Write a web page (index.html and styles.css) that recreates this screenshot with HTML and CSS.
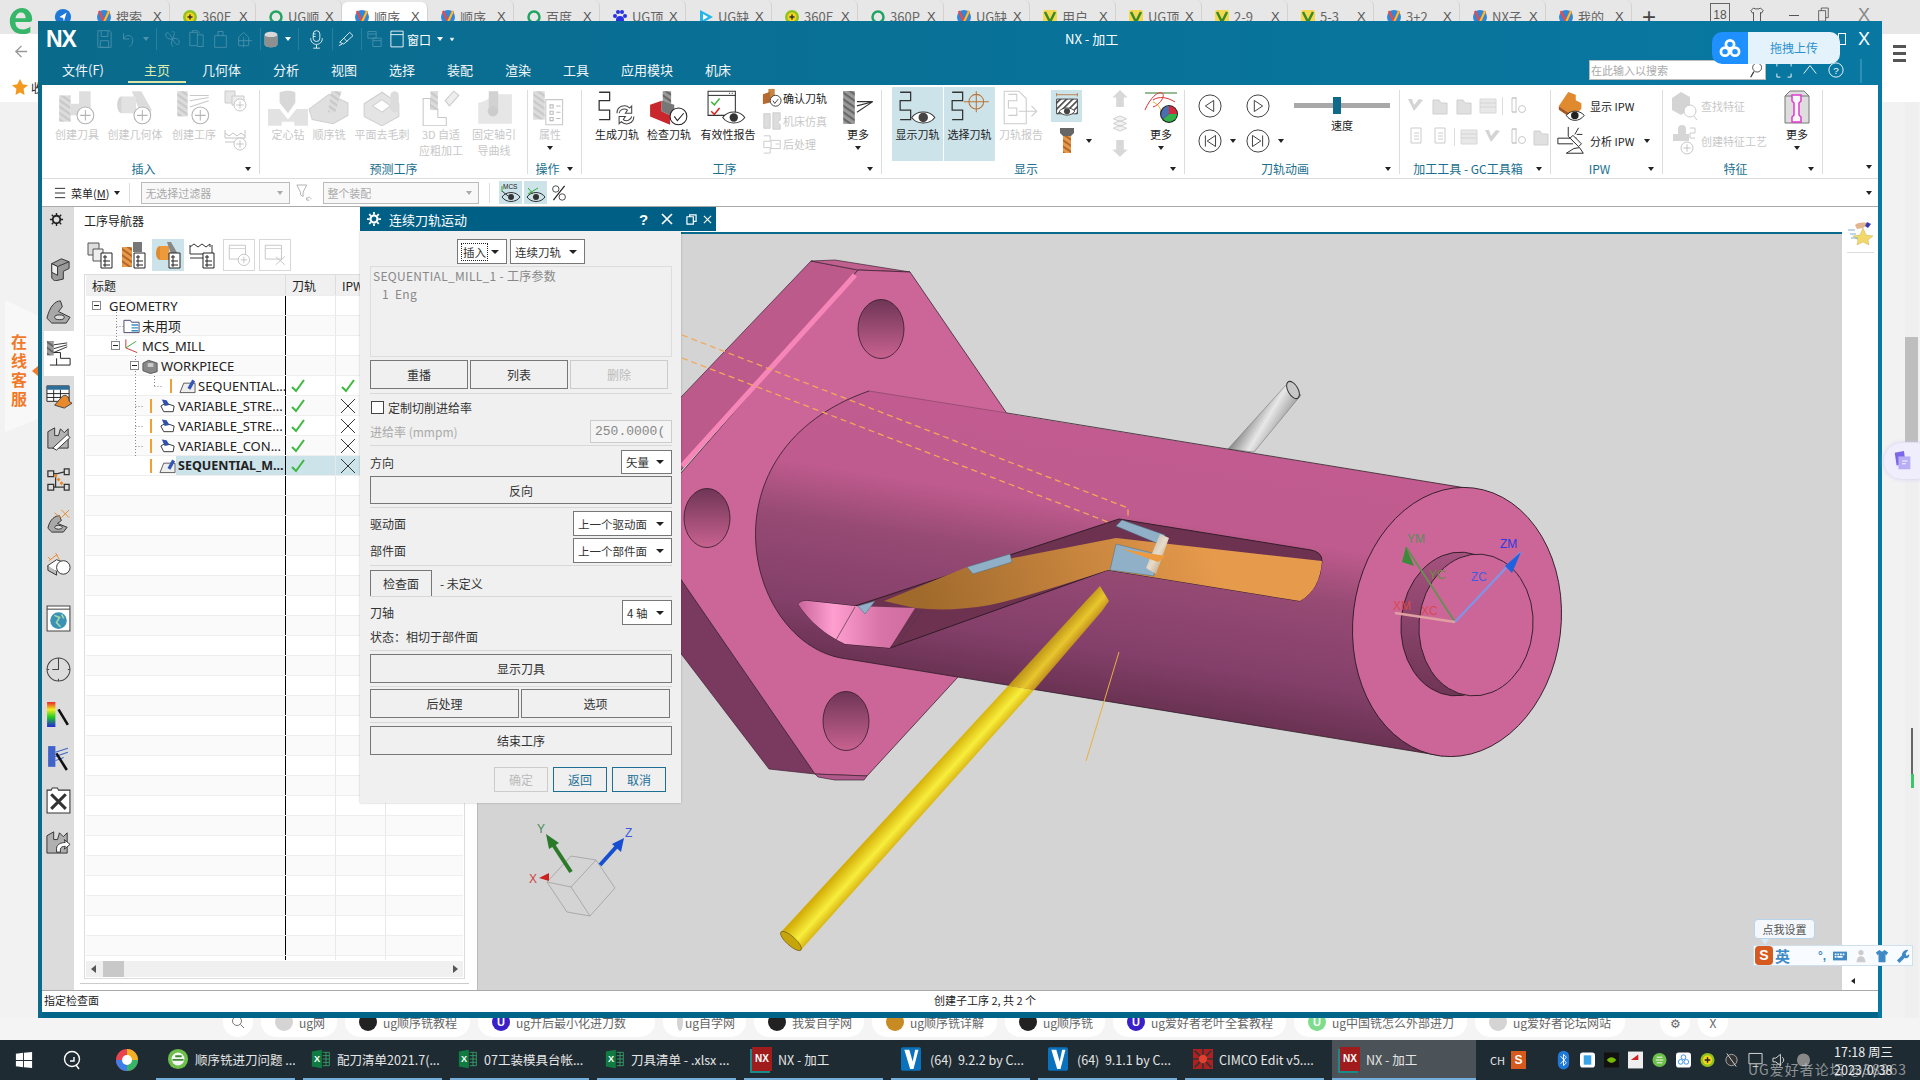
FILE: index.html
```html
<!DOCTYPE html>
<html lang="zh-CN">
<head>
<meta charset="utf-8">
<title>NX - 加工</title>
<link rel="stylesheet" href="styles.css">
</head>
<body>
<svg class="defs" aria-hidden="true">
<defs>
<g id="plus"><circle r="8" fill="#fff" stroke="#b4b4b4"/><path d="M-5 0H5M0-5V5" stroke="#b4b4b4" fill="none"/></g>
<pattern id="flute" width="5" height="5" patternUnits="userSpaceOnUse" patternTransform="rotate(35)"><rect width="5" height="5" fill="#dcdcdc"/><rect width="5" height="2" fill="#c8c8c8"/></pattern>
<pattern id="fluted" width="5" height="5" patternUnits="userSpaceOnUse" patternTransform="rotate(35)"><rect width="5" height="5" fill="#9a9a9a"/><rect width="5" height="2" fill="#666"/></pattern>
<pattern id="flutor" width="5" height="5" patternUnits="userSpaceOnUse" patternTransform="rotate(35)"><rect width="5" height="5" fill="#e89a4a"/><rect width="5" height="2" fill="#b5662a"/></pattern>
<pattern id="hatch" width="5" height="5" patternUnits="userSpaceOnUse" patternTransform="rotate(45)"><rect width="5" height="5" fill="#fff"/><rect width="2" height="5" fill="#555"/></pattern>
<symbol id="i-cr-tool" viewBox="0 0 40 34"><path d="M3 5h11v25H3z" fill="url(#flute)"/><path d="M14 13h8V1h11v23H14z" fill="#dedede"/><use href="#plus" x="28" y="24"/></symbol>
<symbol id="i-cr-geom" viewBox="0 0 40 34"><path d="M17 1l9 0 10 18-8 10z" fill="#dcdcdc"/><ellipse cx="7" cy="14" rx="4" ry="8" fill="#d4d4d4"/><path d="M7 6h14v16H7z" fill="#e2e2e2"/><use href="#plus" x="27" y="24"/></symbol>
<symbol id="i-cr-op" viewBox="0 0 40 34"><path d="M4 1h10v24H4z" fill="url(#flute)"/><path d="M16 5h18M16 10l18-3M16 16l18-6" stroke="#c8c8c8" fill="none"/><use href="#plus" x="26" y="24"/></symbol>
<symbol id="i-sm1" viewBox="0 0 24 24"><path d="M1 1h10v12H1z" fill="#e6e6e6" stroke="#ccc"/><path d="M8 6h12v9H8z" fill="#eee" stroke="#ccc"/><use href="#plus" transform="translate(16 15) scale(.75)"/></symbol>
<symbol id="i-sm2" viewBox="0 0 24 24"><path d="M1 5l4 3 4-3 4 3 4-3 4 3M1 2v8h20V2M1 14h20" stroke="#c4c4c4" fill="none"/><use href="#plus" transform="translate(16 16) scale(.75)"/></symbol>
<symbol id="i-drill" viewBox="0 0 40 34"><path d="M12 2c5-2 12-2 15 0v10l-7 10-8-10z" fill="#d8d8d8"/><path d="M1 18h11l8 10 8-10h11v16H26v-4h-12v4H1z" fill="#e2e2e2"/></symbol>
<symbol id="i-mill" viewBox="0 0 40 34"><path d="M1 18L20 4l18 8v12l-14 8L4 28z" fill="#e0e0e0" stroke="#d0d0d0"/><path d="M22 1h10l-6 20h-7z" fill="url(#flute)"/></symbol>
<symbol id="i-deburr" viewBox="0 0 40 34"><path d="M3 13L20 2l16 11v12L20 34 3 25z" fill="#e4e4e4" stroke="#cfcfcf"/><path d="M11 15l9-6 8 6-8 6z" fill="#fff" stroke="#cfcfcf"/><rect x="28" y="1" width="8" height="20" rx="4" fill="#dcdcdc"/></symbol>
<symbol id="i-adapt" viewBox="0 0 40 34"><path d="M3 8h7v10h7v8h8v8H3z" fill="none" stroke="#c8c8c8"/><path d="M10 1h7v18h-7z" fill="url(#flute)"/><path d="M24 10l8-9 5 4-9 10z" fill="#eee" stroke="#ccc"/></symbol>
<symbol id="i-fix" viewBox="0 0 40 34"><path d="M5 12c8 0 12-8 20-8h12v28H5z" fill="#e6e6e6"/><path d="M15 1h9v18h-9z" fill="#d2d2d2"/><circle cx="19" cy="20" r="5" fill="#ccc"/></symbol>
<symbol id="i-prop" viewBox="0 0 40 34"><path d="M4 1h11v27H4z" fill="url(#flute)"/><path d="M16 9h16v24H16z" fill="#fff" stroke="#c8c8c8"/><path d="M20 14h3v3h-3zM20 20h3v3h-3zM20 26h3v3h-3zM26 15h4M26 21h4M26 27h4" stroke="#bbb" fill="none"/></symbol>
<symbol id="i-gen" viewBox="0 0 40 34"><path d="M3 2h10v8H3v9h10v9H3" fill="none" stroke="#333" stroke-width="1.2"/><path d="M20 22a7 7 0 0 1 12-5l2-2v7h-6l2-3a5 5 0 0 0-8 3m14 3a7 7 0 0 1-12 5l-2 2v-7h6l-2 3a5 5 0 0 0 8-3" fill="none" stroke="#444"/></symbol>
<symbol id="i-verify" viewBox="0 0 40 34"><path d="M14 1h8v12h-8z" fill="url(#fluted)"/><path d="M2 14l11-4 0 10 8 4 0 9-19-8z" fill="#c9272c"/><path d="M13 10l12 4v4l-4 6-8-4z" fill="#777"/><circle cx="29" cy="25" r="8" fill="#fff" stroke="#222"/><path d="M25 25l3 4 6-7" fill="none" stroke="#222"/></symbol>
<symbol id="i-report" viewBox="0 0 40 34"><path d="M1 1h26v23H1z" fill="#fff" stroke="#333"/><path d="M1 5h26" stroke="#333"/><path d="M21 3h1M23.5 3h1" stroke="#333"/><path d="M4 11l3 3 5-6" stroke="#3cb43c" fill="none" stroke-width="1.4"/><path d="M4 20l3 3 5-6" stroke="#d22" fill="none" stroke-width="1.4"/><path d="M15 26c5-7 16-7 21 0-5 7-16 7-21 0z" fill="#fff" stroke="#333"/><circle cx="25.5" cy="26" r="4" fill="#333"/></symbol>
<symbol id="i-confirm" viewBox="0 0 22 22"><path d="M7 1h7v11H7z" fill="#c48844"/><path d="M1 7l8-3v12l-8 2z" fill="#b66a2f"/><circle cx="15" cy="14" r="6" fill="#fff" stroke="#333"/><path d="M12 14l2 3 4-5" stroke="#333" fill="none"/></symbol>
<symbol id="i-sim" viewBox="0 0 22 22"><path d="M2 3h7v16H2zM12 2h8v8l-3 2 3 3v5h-8z" fill="#ddd" stroke="#ccc"/></symbol>
<symbol id="i-post" viewBox="0 0 22 22"><path d="M2 2h7v6H2v7h7v6H2" fill="none" stroke="#c8c8c8"/><path d="M10 7h10v9H10zM15 11h4" stroke="#c8c8c8" fill="none"/></symbol>
<symbol id="i-moretool" viewBox="0 0 32 34"><path d="M2 1h11v31H2z" fill="url(#fluted)"/><path d="M15 11h15M15 15l15-4M15 21l15-10" stroke="#333" fill="none"/></symbol>
<symbol id="i-show" viewBox="0 0 40 34"><path d="M3 2h10v8H3v9h10v9H3" fill="none" stroke="#333" stroke-width="1.2"/><path d="M14 26c5-7 17-7 22 0-5 7-17 7-22 0z" fill="#fff" stroke="#333"/><circle cx="25" cy="26" r="4.5" fill="#444"/></symbol>
<symbol id="i-select" viewBox="0 0 40 34"><path d="M3 2h10v8H3v9h10v9H3" fill="none" stroke="#333" stroke-width="1.2"/><circle cx="26" cy="11" r="7" fill="none" stroke="#b8763a"/><path d="M14 11h24M26 1v20" stroke="#b8763a" fill="none"/></symbol>
<symbol id="i-path-rep" viewBox="0 0 40 34"><path d="M4 1h14l7 7v24H4z" fill="#fff" stroke="#ccc"/><path d="M8 4h8v6H8v7h8v7H8" fill="none" stroke="#ccc"/><path d="M18 20h16M30 15l5 5-5 5" stroke="#ccc" fill="none"/></symbol>
<symbol id="i-box" viewBox="0 0 30 32"><path d="M3 3h24M3 1v4M27 1v4" stroke="#b8763a" fill="none"/><path d="M3 8h24v17H3z" fill="url(#hatch)" stroke="#333"/><path d="M6 22c4-5 14-5 18 0-4 6-14 6-18 0z" fill="#fff" stroke="#333"/><circle cx="15" cy="22" r="3.5" fill="#444"/></symbol>
<symbol id="i-endmill" viewBox="0 0 22 26"><path d="M4 0h14v5l-3 3H7L4 5z" fill="#666"/><path d="M7 8h8v17H7z" fill="url(#flutor)"/></symbol>
<symbol id="i-up" viewBox="0 0 20 18"><path d="M10 0l8 8h-4v10H6V8H2z" fill="#d8d8d8"/></symbol>
<symbol id="i-down" viewBox="0 0 20 18"><path d="M10 18l8-8h-4V0H6v10H2z" fill="#d8d8d8"/></symbol>
<symbol id="i-layers" viewBox="0 0 20 18"><path d="M3 4l7-3 7 3-7 3zM3 9l7-3 7 3-7 3zM3 14l7-3 7 3-7 3z" fill="#f2f2f2" stroke="#ccc"/></symbol>
<symbol id="i-more2" viewBox="0 0 34 36"><path d="M1 3h32" stroke="#2a7a2a"/><path d="M1 20C6 8 14 1 18 3s-2 12-9 14m0-7c6-4 14-3 22 2" stroke="#d33" fill="none"/><path d="M9 12c6 2 8 8 10 14" stroke="#e8b030" fill="none"/><circle cx="25" cy="24" r="9" fill="#222"/><path d="M25 24V16a8 8 0 0 1 8 8z" fill="#d22c3a"/><path d="M25 24h8a8 8 0 0 1-14 5z" fill="#35b34a"/><path d="M25 24l-6 5a8 8 0 0 1 6-13z" fill="#4a6fb0"/></symbol>
<symbol id="i-ipw" viewBox="0 0 32 34"><path d="M2 17l10-15 8 3 0 6 6 3 0 6-8 8z" fill="#e08a30"/><path d="M2 17l16 11v4L2 21z" fill="#a55a20"/><path d="M10 27c4-6 14-6 19 0-5 7-15 7-19 0z" fill="#fff" stroke="#222"/><circle cx="19" cy="27" r="4" fill="#222"/></symbol>
<symbol id="i-ipwan" viewBox="0 0 32 34"><path d="M1 14h20M1 14v6h16" stroke="#222" fill="none"/><path d="M12 2v10l8 8M23 3l-4 7M27 10h-6" stroke="#222" fill="none"/><path d="M17 11l9 9-3 3-9-9z" fill="#fff" stroke="#222"/><path d="M10 30h18l-4-6-6 1z" fill="#fff" stroke="#222"/></symbol>
<symbol id="i-find" viewBox="0 0 28 32"><path d="M2 8l9-6 9 5v12l-9 6-9-5z" fill="#d4d4d4"/><circle cx="20" cy="21" r="6" fill="#fff" stroke="#ccc"/><path d="M24 26l3 4" stroke="#ccc"/></symbol>
<symbol id="i-create" viewBox="0 0 28 32"><path d="M8 4a4 4 0 0 1 8 0v5h3v7H3V9h5z" fill="#d6d6d6"/><path d="M20 3h5v5h-5v5h5" stroke="#ccc" fill="none"/><use href="#plus" transform="translate(17 23) scale(.75)"/></symbol>
<symbol id="i-more3" viewBox="0 0 32 36"><path d="M4 6l5-5h14l5 5v27H4z" fill="#ddd" stroke="#777"/><path d="M11 5h9v6l-2 2v12l2 2v5h-9v-5l2-2V13l-2-2z" fill="#f8f8f8" stroke="#e03ad0" stroke-width="1.5"/><path d="M4 6h7M20 6h8" stroke="#777"/></symbol>
<symbol id="i-tb" viewBox="0 0 20 20"><path d="M3 4h6l2 3h6v11H3z" fill="#e0e0e0" stroke="#cfcfcf"/></symbol>
<symbol id="i-tb2" viewBox="0 0 20 20"><path d="M2 3l6 12 9-11-4-1-5 6-2-6z" fill="#d4d4d4"/></symbol>
<symbol id="i-tb3" viewBox="0 0 20 20"><path d="M2 3h16v14H2z" fill="#e8e8e8" stroke="#d8d8d8"/><path d="M2 7h16M2 11h16" stroke="#d4d4d4"/></symbol>
<symbol id="i-tb4" viewBox="0 0 20 20"><path d="M5 1h10v15H5z" fill="#fff" stroke="#ccc"/><path d="M8 6h5M8 9h5M8 12h5" stroke="#ccc"/></symbol>
<symbol id="i-tb5" viewBox="0 0 20 20"><path d="M5 2h4v14h-4zM5 2h5M5 16h5" fill="none" stroke="#c8c8c8"/><circle cx="15" cy="13" r="3.5" fill="none" stroke="#c8c8c8"/></symbol>
<symbol id="i-dlgadd" viewBox="0 0 32 32"><path d="M4 4h20v17H4z" fill="none" stroke="#bdbdbd"/><path d="M4 8h20" stroke="#ccc"/><circle cx="22" cy="22" r="7" fill="#fff" stroke="#bdbdbd"/><path d="M18 22h8M22 18v8" stroke="#bdbdbd"/></symbol>
<symbol id="i-dlgdel" viewBox="0 0 32 32"><path d="M4 4h20v17H4z" fill="none" stroke="#bdbdbd"/><path d="M4 8h20" stroke="#ccc"/><path d="M17 18l11 10M28 18L17 28" stroke="#bdbdbd"/></symbol>
<symbol id="i-nav1" viewBox="0 0 26 28"><path d="M1 2h11v12H1z" fill="#ddd" stroke="#555"/><path d="M6 8h10v12H6z" fill="#eee" stroke="#555"/><path d="M14 12h11v15H14z" fill="#fff" stroke="#222"/><path d="M17 15h2v2h-2zM17 19h2v2h-2zM17 23h2v2h-2zM20 20h3M20 24h3" stroke="#222" fill="none"/></symbol>
<symbol id="i-nav2" viewBox="0 0 26 28"><path d="M1 6h10v20H1z" fill="url(#flutor)"/><path d="M12 1h9v10h-9z" fill="#777"/><path d="M13 12h11v15H13z" fill="#fff" stroke="#222"/><path d="M16 15h2v2h-2zM16 19h2v2h-2zM16 23h2v2h-2zM19 20h3M19 24h3" stroke="#222" fill="none"/></symbol>
<symbol id="i-nav3" viewBox="0 0 26 28"><ellipse cx="5" cy="12" rx="4" ry="7" fill="#e08a30"/><path d="M5 5h9v14H5z" fill="#ee9a3a"/><path d="M12 1l4 0 8 14-6 4z" fill="#888"/><path d="M14 12h11v15H14z" fill="#fff" stroke="#222"/><path d="M17 15h2v2h-2zM17 19h2v2h-2zM17 23h2v2h-2zM20 20h3M20 24h3" stroke="#222" fill="none"/></symbol>
<symbol id="i-nav4" viewBox="0 0 26 28"><path d="M1 6l4-3 4 3 4-3 4 3 4-3v3M1 4v9h22V4M1 17h14" stroke="#333" fill="none"/><path d="M14 12h11v15H14z" fill="#fff" stroke="#222"/><path d="M17 15h2v2h-2zM17 19h2v2h-2zM17 23h2v2h-2zM20 20h3M20 24h3" stroke="#222" fill="none"/></symbol>
<symbol id="tr-folder" viewBox="0 0 18 16"><path d="M1 2h7l1 2h8v11H1z" fill="#fff" stroke="#446"/><path d="M9 7h7M9 10h7M9 13h7" stroke="#3a8ec2" stroke-width="1.5"/></symbol>
<symbol id="tr-mcs" viewBox="0 0 18 16"><path d="M3 10V1M3 10l12 5" fill="none" stroke="#c33"/><path d="M3 10l11-7" stroke="#3a3" fill="none"/></symbol>
<symbol id="tr-work" viewBox="0 0 18 16"><path d="M1 5l6-3 9 3v9l-7 2-8-3z" fill="#888" stroke="#555"/><path d="M6 5h6v4H6z" fill="#ccc"/></symbol>
<symbol id="tr-seq" viewBox="0 0 18 16"><path d="M1 15L5 5h12v10z" fill="#eee" stroke="#555"/><path d="M9 10l5-9 3 2-5 9z" fill="#3356b8"/></symbol>
<symbol id="tr-var" viewBox="0 0 18 16"><path d="M2 8l5-3 9 3-1 6H5z" fill="#fff" stroke="#333"/><path d="M3 1l5 1 3 5-5 1z" fill="#2f52a8"/></symbol>
<symbol id="ok" viewBox="0 0 16 14"><path d="M2 8l4 4 8-11" fill="none" stroke="#3cb83c" stroke-width="2"/></symbol>
<symbol id="no" viewBox="0 0 16 14"><path d="M1 0l14 14M15 0L1 14" fill="none" stroke="#333"/></symbol>
<symbol id="t-n" viewBox="0 0 16 16"><circle cx="8" cy="8" r="7" fill="#2a88dd"/><path d="M3 2l5 11 5-11" fill="none" stroke="#e64a4a" stroke-width="2.5"/><path d="M8 13l5-11" stroke="#f2c230" stroke-width="2" fill="none"/></symbol>
<symbol id="t-360" viewBox="0 0 16 16"><circle cx="8" cy="8" r="7" fill="#8fc31f"/><circle cx="8" cy="8" r="4.5" fill="#f4d41c"/><path d="M5.5 8h5M8 5.5v5" stroke="#333" stroke-width="1.5"/></symbol>
<symbol id="t-o" viewBox="0 0 16 16"><circle cx="8" cy="8" r="5.5" fill="none" stroke="#1fa463" stroke-width="2.5"/></symbol>
<symbol id="t-paw" viewBox="0 0 16 16"><circle cx="8" cy="11" r="4" fill="#2932e1"/><circle cx="3" cy="7" r="2" fill="#2932e1"/><circle cx="13" cy="7" r="2" fill="#2932e1"/><circle cx="6" cy="3" r="2" fill="#2932e1"/><circle cx="10" cy="3" r="2" fill="#2932e1"/></symbol>
<symbol id="t-play" viewBox="0 0 16 16"><path d="M2 1l13 7-13 7z" fill="#27b5e8"/><path d="M5 5l5 3-5 3z" fill="#fff"/></symbol>
<symbol id="t-v" viewBox="0 0 16 16"><rect x="1" y="1" width="14" height="14" rx="2" fill="#f4d850"/><path d="M3 3l5 10 5-10" fill="none" stroke="#3a8a2a" stroke-width="2.5"/></symbol>
<symbol id="xl" viewBox="0 0 24 24"><path d="M1 3l12-2v22L1 21z" fill="#107c41"/><path d="M14 4h8v16h-8M14 8h8M14 12h8M14 16h8M18 4v16" stroke="#3aa66a" fill="none"/><text x="3.5" y="16" font-size="11" font-family="Liberation Sans" font-weight="700" fill="#fff">X</text></symbol>
<symbol id="vr" viewBox="0 0 24 28"><rect width="24" height="28" rx="2" fill="#0a72bc"/><path d="M4 3l7 23h4l6-23h-4l-3 14-4-14z" fill="#fff"/></symbol>
</defs>
</svg>

<div class="desktop">
  <div class="browser">
    <div class="tabbar">
      <div class="edge-logo"><svg class="edge-ic" viewBox="0 0 28 30"><path d="M24 16H8c0 5 3 8 8 8 3 0 6-1 8-3v6c-3 2-6 2-9 2C7 29 2 23 2 15 2 7 8 1 15 1c6 0 11 5 11 12 0 1 0 2-2 3zM8 12h11c0-4-2-6-5-6s-5 2-6 6z" fill="#35b668"/></svg></div>
      <svg class="tab-nav" viewBox="0 0 20 20"><circle cx="10" cy="10" r="9" fill="#1e78d8"/><path d="M14 5l-3 10-1-4-4-1z" fill="#fff"/></svg>
      <div class="tabs">
        <div class="tab"><svg class="tab-ic"><use href="#t-n"/></svg><span class="tab-t">搜索</span><span class="tab-x">X</span></div>
        <div class="tab"><svg class="tab-ic"><use href="#t-360"/></svg><span class="tab-t">360E</span><span class="tab-x">X</span></div>
        <div class="tab"><svg class="tab-ic"><use href="#t-o"/></svg><span class="tab-t">UG顺</span><span class="tab-x">X</span></div>
        <div class="tab active"><svg class="tab-ic"><use href="#t-n"/></svg><span class="tab-t">顺序</span><span class="tab-x">X</span></div>
        <div class="tab"><svg class="tab-ic"><use href="#t-n"/></svg><span class="tab-t">顺序</span><span class="tab-x">X</span></div>
        <div class="tab"><svg class="tab-ic"><use href="#t-o"/></svg><span class="tab-t">百度</span><span class="tab-x">X</span></div>
        <div class="tab"><svg class="tab-ic"><use href="#t-paw"/></svg><span class="tab-t">UG顶</span><span class="tab-x">X</span></div>
        <div class="tab"><svg class="tab-ic"><use href="#t-play"/></svg><span class="tab-t">UG缺</span><span class="tab-x">X</span></div>
        <div class="tab"><svg class="tab-ic"><use href="#t-360"/></svg><span class="tab-t">360E</span><span class="tab-x">X</span></div>
        <div class="tab"><svg class="tab-ic"><use href="#t-o"/></svg><span class="tab-t">360P</span><span class="tab-x">X</span></div>
        <div class="tab"><svg class="tab-ic"><use href="#t-n"/></svg><span class="tab-t">UG缺</span><span class="tab-x">X</span></div>
        <div class="tab"><svg class="tab-ic"><use href="#t-v"/></svg><span class="tab-t">用户</span><span class="tab-x">X</span></div>
        <div class="tab"><svg class="tab-ic"><use href="#t-v"/></svg><span class="tab-t">UG顶</span><span class="tab-x">X</span></div>
        <div class="tab"><svg class="tab-ic"><use href="#t-v"/></svg><span class="tab-t">2-9</span><span class="tab-x">X</span></div>
        <div class="tab"><svg class="tab-ic"><use href="#t-v"/></svg><span class="tab-t">5-3</span><span class="tab-x">X</span></div>
        <div class="tab"><svg class="tab-ic"><use href="#t-n"/></svg><span class="tab-t">3+2</span><span class="tab-x">X</span></div>
        <div class="tab"><svg class="tab-ic"><use href="#t-n"/></svg><span class="tab-t">NX子</span><span class="tab-x">X</span></div>
        <div class="tab"><svg class="tab-ic"><use href="#t-n"/></svg><span class="tab-t">我的</span><span class="tab-x">X</span></div>
        <div class="tab-add">+</div>
      </div>
      <div class="win-ctl">
        <span class="badge18">18</span>
        <svg class="ctl-ic" viewBox="0 0 16 18"><path d="M4 1L1 4l2 3 1-1v11h8V6l1 1 2-3-3-3-2 1H6z" fill="none" stroke="#444"/></svg>
        <span class="ctl-min"></span>
        <svg class="ctl-ic" viewBox="0 0 16 18"><path d="M3 4h8v12H3zM6 4V1h8v11h-3" fill="none" stroke="#555"/></svg>
        <span class="ctl-x">X</span>
      </div>
    </div>
    <div class="addr">
      <div class="addr-left">
        <svg class="back" viewBox="0 0 16 16"><path d="M14 8H2M8 2L2 8l6 6" fill="none" stroke="#999" stroke-width="1.5"/></svg>
      </div>
      <div class="fav"><svg class="star" viewBox="0 0 20 20"><path d="M10 1l3 6 6 1-5 4 1 7-5-3-5 3 1-7-5-4 6-1z" fill="#f39a1e"/></svg><span>收</span></div>
      <div class="burger"><i></i><i></i><i></i></div>
    </div>
    <div class="page">
      <div class="side-online">
        <div class="online-tab"><span>在</span><span>线</span><span>客</span><span>服</span></div>
        <i class="online-arrow"></i>
      </div>
      <div class="page-scroll"><i class="thumb-main"></i><i class="thumb-low"></i><i class="thumb-green"></i></div>
    </div>
    <div class="suggest">
      <span class="pill pill-round"><svg class="pill-mg" viewBox="0 0 14 14"><circle cx="6" cy="6" r="4.5" fill="none" stroke="#777"/><path d="M9.5 9.5L13 13" stroke="#777"/></svg></span>
      <span class="pill p76"><i class="dot d-gray"></i>ug网</span>
      <span class="pill p125"><i class="dot d-black"></i>ug顺序铣教程</span>
      <span class="pill p177"><i class="dot d-blue">U</i>ug开后最小化进刀数</span>
      <span class="pill p83"><i class="dot dot-s d-gray"></i>ug自学网</span>
      <span class="pill p110"><i class="dot d-black"></i>我爱自学网</span>
      <span class="pill p125"><i class="dot d-orange"></i>ug顺序铣详解</span>
      <span class="pill p100"><i class="dot d-black"></i>ug顺序铣</span>
      <span class="pill p173"><i class="dot d-blue">U</i>ug爱好者老叶全套教程</span>
      <span class="pill p173"><i class="dot d-green">U</i>ug中国铣怎么外部进刀</span>
      <span class="pill p150"><i class="dot d-gray"></i>ug爱好者论坛网站</span>
      <span class="pill pill-round gap-right">⚙</span>
      <span class="pill pill-round">X</span>
    </div>
  </div>

  <div class="nx">
    <div class="nx-title">
      <div class="nx-logo">NX</div>
      <div class="qa">
        <svg class="qa-ic" viewBox="0 0 20 24"><path d="M2 2h14l2 2v18H2zM6 2v7h8V2M5 14h10v8H5z" fill="none" stroke="#4d93ad"/></svg>
        <svg class="qa-ic" viewBox="0 0 20 24"><path d="M4 5v7h7M4 12c3-7 12-5 11 3 0 3-2 5-4 6" fill="none" stroke="#4d93ad"/></svg>
        <svg class="qa-caret" viewBox="0 0 6 4"><path d="M0 0h6L3 4z" fill="#4d93ad"/></svg>
        <i class="qa-sep"></i>
        <svg class="qa-ic" viewBox="0 0 20 24"><path d="M10 12C6 4 3 3 2 6s2 7 8 6c4 8 8 8 8 4s-4-6-8-4zm0 0c-2 5-1 9 1 9M10 12c3-6 3-9 0-9" fill="none" stroke="#4d93ad"/></svg>
        <svg class="qa-ic" viewBox="0 0 20 24"><path d="M2 4h9v16H2zM11 7h7v14h-7M5 4V2h6l3 3" fill="none" stroke="#4d93ad"/></svg>
        <svg class="qa-ic" viewBox="0 0 20 24"><path d="M3 8h14v14H3zM7 8V3h6v5" fill="none" stroke="#4d93ad"/></svg>
        <svg class="qa-ic" viewBox="0 0 20 24"><path d="M3 10l6-6 6 6v10H3zM9 10v12M3 14h16" fill="none" stroke="#4d93ad"/></svg>
        <i class="qa-sep qs-m5"></i>
        <svg class="qa-ic cube" viewBox="0 0 20 24"><path d="M2 6c0-5 16-5 16 0v12c0 5-16 5-16 0z" fill="#d8d8d8"/><path d="M2 6c0 4 16 4 16 0v12c0 5-16 5-16 0z" fill="#8f8f8f"/></svg>
        <svg class="qa-caret w" viewBox="0 0 6 4"><path d="M0 0h6L3 4z" fill="#fff"/></svg>
        <i class="qa-sep qs-p2"></i>
        <svg class="qa-ic" viewBox="0 0 20 24"><rect x="6" y="2" width="8" height="13" rx="4" fill="none" stroke="#fff"/><path d="M3 11c0 10 14 10 14 0M10 19v4M6 23h8M6 6h3M6 9h3" stroke="#fff" fill="none"/></svg>
        <i class="qa-sep qs-m3"></i>
        <svg class="qa-ic" viewBox="0 0 20 24"><path d="M3 16L15 4l4 4-11 10zM8 11l4 4M2 20l4-2" fill="none" stroke="#fff"/></svg>
        <i class="qa-sep qs-m3"></i>
        <svg class="qa-ic" viewBox="0 0 20 24"><path d="M2 3h10v8H2zM8 11h10v10H8zM2 6h10M8 14h10" fill="none" stroke="#4d93ad"/></svg>
        <svg class="qa-win" viewBox="0 0 16 20"><path d="M1 1h14v18H1zM1 5h14" fill="none" stroke="#fff"/></svg>
        <span class="qa-txt">窗口</span>
        <svg class="qa-caret w" viewBox="0 0 6 4"><path d="M0 0h6L3 4z" fill="#fff"/></svg>
        <svg class="qa-caret w" viewBox="0 0 6 6"><path d="M0 0h6M0 2h6L3 6z" fill="#fff" stroke="#fff" stroke-width=".5"/></svg>
      </div>
      <div class="nx-name">NX - 加工</div>
      <div class="nx-winbtns"><i class="nx-restore"></i><span class="nx-close">X</span></div>
    </div>
    <div class="nx-menu">
      <span class="mi mi-file">文件(F)</span>
      <span class="mi on">主页</span>
      <span class="mi">几何体</span>
      <span class="mi">分析</span>
      <span class="mi">视图</span>
      <span class="mi">选择</span>
      <span class="mi">装配</span>
      <span class="mi">渲染</span>
      <span class="mi">工具</span>
      <span class="mi">应用模块</span>
      <span class="mi">机床</span>
      <div class="search">
        <div class="search-box"><span>在此输入以搜索</span><svg class="mag" viewBox="0 0 16 20"><circle cx="10" cy="7" r="5.5" fill="none" stroke="#333"/><path d="M6 12l-4 7" stroke="#333" stroke-width="1.5"/></svg></div>
        <svg class="sr-ic" viewBox="0 0 18 18"><path d="M1 5V1h4M13 1h4v4M17 13v4h-4M5 17H1v-4" fill="none" stroke="#fff"/></svg>
        <svg class="sr-ic" viewBox="0 0 18 18"><path d="M2 13l7-9 7 9" fill="none" stroke="#fff"/></svg>
        <svg class="sr-ic" viewBox="0 0 18 18"><circle cx="9" cy="9" r="8" fill="none" stroke="#fff"/><text x="6" y="13" font-size="11" font-family="Liberation Sans" fill="#fff">?</text></svg>
        <i class="sr-bang"></i>
      </div>
    </div>

    <div class="ribbon">
      <div class="g g1">
        <div class="g-body">
          <div class="rb dis w46"><svg class="ic34"><use href="#i-cr-tool"/></svg><span>创建刀具</span></div>
          <div class="rb dis w58"><svg class="ic34"><use href="#i-cr-geom"/></svg><span>创建几何体</span></div>
          <div class="rb dis w48"><svg class="ic34"><use href="#i-cr-op"/></svg><span>创建工序</span></div>
          <div class="stack-ic"><svg class="ic24"><use href="#i-sm1"/></svg><svg class="ic24"><use href="#i-sm2"/></svg></div>
        </div>
        <div class="g-foot"><span>插入</span><i class="car"></i></div>
      </div>
      <div class="g g2">
        <div class="g-body">
          <div class="rb dis w36"><svg class="ic34"><use href="#i-drill"/></svg><span>定心钻</span></div>
          <div class="rb dis w36"><svg class="ic34"><use href="#i-mill"/></svg><span>顺序铣</span></div>
          <div class="rb dis w60"><svg class="ic34"><use href="#i-deburr"/></svg><span>平面去毛刺</span></div>
          <div class="rb dis w48"><svg class="ic34"><use href="#i-adapt"/></svg><span>3D 自适<br>应粗加工</span></div>
          <div class="rb dis w48"><svg class="ic34"><use href="#i-fix"/></svg><span>固定轴引<br>导曲线</span></div>
        </div>
        <div class="g-foot"><span>预测工序</span></div>
      </div>
      <div class="g g3">
        <div class="g-body">
          <div class="rb dis w36"><svg class="ic34"><use href="#i-prop"/></svg><span>属性</span><i class="car car-b"></i></div>
        </div>
        <div class="g-foot"><span>操作</span><i class="car"></i></div>
      </div>
      <div class="g g4">
        <div class="g-body">
          <div class="rb w50"><svg class="ic34"><use href="#i-gen"/></svg><span>生成刀轨</span></div>
          <div class="rb w50"><svg class="ic34"><use href="#i-verify"/></svg><span>检查刀轨</span></div>
          <div class="rb w64"><svg class="ic34"><use href="#i-report"/></svg><span>有效性报告</span></div>
          <div class="mini w76">
            <div class="mini-i"><svg class="ic20"><use href="#i-confirm"/></svg><span>确认刀轨</span></div>
            <div class="mini-i dis"><svg class="ic20"><use href="#i-sim"/></svg><span>机床仿真</span></div>
            <div class="mini-i dis"><svg class="ic20"><use href="#i-post"/></svg><span>后处理</span></div>
          </div>
          <div class="rb w36"><svg class="ic34"><use href="#i-moretool"/></svg><span>更多</span><i class="car car-b"></i></div>
        </div>
        <div class="g-foot"><span>工序</span><i class="car"></i></div>
      </div>
      <div class="g g5">
        <div class="g-body">
          <div class="rb w51 hi"><svg class="ic34"><use href="#i-show"/></svg><span>显示刀轨</span></div>
          <div class="rb w51 hi"><svg class="ic34"><use href="#i-select"/></svg><span>选择刀轨</span></div>
          <div class="rb dis w50"><svg class="ic34"><use href="#i-path-rep"/></svg><span>刀轨报告</span></div>
          <div class="disp-col">
            <span class="disp-box"><svg class="ic-box"><use href="#i-box"/></svg></span>
            <span class="disp-tool"><svg class="ic-tool"><use href="#i-endmill"/></svg><i class="car"></i></span>
          </div>
          <div class="arrows"><svg class="ic-ar"><use href="#i-up"/></svg><svg class="ic-ar"><use href="#i-layers"/></svg><svg class="ic-ar"><use href="#i-down"/></svg></div>
          <div class="rb w40 ml8"><svg class="ic34"><use href="#i-more2"/></svg><span>更多</span><i class="car car-b"></i></div>
        </div>
        <div class="g-foot"><span>显示</span><i class="car"></i></div>
      </div>
      <div class="g g6">
        <div class="g-body anim">
          <div class="anim-grid">
            <svg class="circ" viewBox="0 0 26 26"><circle cx="13" cy="13" r="12" fill="#fff" stroke="#333"/><path d="M17 7v12L8 13z" fill="none" stroke="#333"/></svg><i></i>
            <svg class="circ" viewBox="0 0 26 26"><circle cx="13" cy="13" r="12" fill="#fff" stroke="#333"/><path d="M9 7v12l9-6z" fill="none" stroke="#333"/></svg><i></i>
            <svg class="circ" viewBox="0 0 26 26"><circle cx="13" cy="13" r="12" fill="#fff" stroke="#333"/><path d="M19 7v12l-9-6zM8 7v12" fill="none" stroke="#333"/></svg><i class="car"></i>
            <svg class="circ" viewBox="0 0 26 26"><circle cx="13" cy="13" r="12" fill="#fff" stroke="#333"/><path d="M7 7v12l9-6zM18 7v12" fill="none" stroke="#333"/></svg><i class="car"></i>
          </div>
          <div class="speed"><div class="track"><i class="knob"></i></div><span>速度</span></div>
        </div>
        <div class="g-foot"><span>刀轨动画</span><i class="car"></i></div>
      </div>
      <div class="g g7">
        <div class="g-body tools">
          <div class="tb-row"><svg class="ic20"><use href="#i-tb2"/></svg><svg class="ic20"><use href="#i-tb"/></svg><svg class="ic20"><use href="#i-tb"/></svg><svg class="ic20"><use href="#i-tb3"/></svg><i class="tb-sep"></i><svg class="ic20"><use href="#i-tb5"/></svg></div>
          <div class="tb-row"><svg class="ic20"><use href="#i-tb4"/></svg><svg class="ic20"><use href="#i-tb4"/></svg><i class="tb-sep"></i><svg class="ic20"><use href="#i-tb3"/></svg><svg class="ic20"><use href="#i-tb2"/></svg><svg class="ic20"><use href="#i-tb5"/></svg><svg class="ic20"><use href="#i-tb"/></svg></div>
        </div>
        <div class="g-foot"><span>加工工具 - GC工具箱</span><i class="car"></i></div>
      </div>
      <div class="g g8">
        <div class="g-body tools2">
          <div class="tl"><svg class="ic-l"><use href="#i-ipw"/></svg><span>显示 IPW</span></div>
          <div class="tl"><svg class="ic-l"><use href="#i-ipwan"/></svg><span>分析 IPW</span><i class="car"></i></div>
        </div>
        <div class="g-foot"><span>IPW</span><i class="car"></i></div>
      </div>
      <div class="g g9">
        <div class="g-body feat">
          <div class="tools2 f-col">
            <div class="tl dis"><svg class="ic-l"><use href="#i-find"/></svg><span>查找特征</span></div>
            <div class="tl dis"><svg class="ic-l"><use href="#i-create"/></svg><span>创建特征工艺</span></div>
          </div>
          <div class="rb w36"><svg class="ic34"><use href="#i-more3"/></svg><span>更多</span><i class="car car-b"></i></div>
        </div>
        <div class="g-foot"><span>特征</span><i class="car"></i></div>
      </div>
      <div class="g-end"><i class="car"></i></div>
    </div>

    <div class="cmd">
      <svg class="cmd-bur" viewBox="0 0 14 12"><path d="M1 1h11M1 6h11M1 11h11" stroke="#222" fill="none"/></svg>
      <span class="cmd-menu">菜单(<u>M</u>)</span>
      <i class="car"></i>
      <i class="cmd-sep"></i>
      <div class="combo c149"><span>无选择过滤器</span><i class="car gray"></i></div>
      <svg class="cmd-fn" viewBox="0 0 18 20"><path d="M1 1h11L8 9v5L5 12V9z" fill="none" stroke="#aaa"/><path d="M12 17c1-3 4-3 5 0M12 15v3h3" stroke="#aaa" fill="none"/></svg>
      <div class="combo c156"><span>整个装配</span><i class="car gray"></i></div>
      <i class="cmd-sep s2"></i>
      <span class="cmd-on"><svg class="ic-cmd" viewBox="0 0 22 22"><text x="3" y="7" font-size="6.5" font-family="Liberation Sans" fill="#222">MCS</text><path d="M2 9l6 5M2 15c4-6 14-6 18 0-4 6-14 6-18 0z" fill="none" stroke="#333"/><path d="M2 4v6" stroke="#3a3"/><circle cx="11" cy="15" r="3" fill="#333"/></svg></span>
      <span class="cmd-on"><svg class="ic-cmd" viewBox="0 0 22 22"><path d="M3 6l5 6M3 12l10-6" fill="none" stroke="#3a3"/><path d="M2 15c4-6 14-6 18 0-4 6-14 6-18 0z" fill="none" stroke="#333"/><circle cx="11" cy="15" r="3" fill="#333"/></svg></span>
      <svg class="cmd-pc" viewBox="0 0 20 22"><circle cx="6" cy="6" r="4" fill="none" stroke="#222"/><circle cx="14" cy="16" r="4" fill="none" stroke="#222"/><path d="M3 20L17 2" stroke="#222" stroke-width="1.5"/></svg>
      <i class="car end-car"></i>
    </div>

    <div class="nx-main">
      <div class="rail">
        <svg class="rail-ic r-gear" viewBox="0 0 16 16"><circle cx="8" cy="8" r="4" fill="none" stroke="#222" stroke-width="2"/><path d="M8 1v3M8 12v3M1 8h3M12 8h3M3 3l2 2M11 11l2 2M13 3l-2 2M5 11l-2 2" stroke="#222" stroke-width="1.5"/></svg>
        <svg class="rail-ic" viewBox="0 0 28 28"><path d="M7 10l10-5 8 3v7l-6 3v8l-9 2-3-3z" fill="#9a9a9a" stroke="#333"/><path d="M7 10l6 3 12-5M13 13v9" stroke="#333" fill="none"/><path d="M7 10l6 3v9l-6-3z" fill="#eee" stroke="#333"/></svg>
        <svg class="rail-ic" viewBox="0 0 28 28"><path d="M2 21C5 8 11 3 16 3l2 6-4 5 12 6-4 6H7z" fill="#a8a8a8" stroke="#333"/><ellipse cx="15" cy="20" rx="5" ry="2.5" fill="#ddd" stroke="#333"/></svg>
        <div class="rail-act"><svg class="rail-ic" viewBox="0 0 28 28"><path d="M1 1h7v15H1z" fill="url(#fluted)"/><path d="M8 5l14-2M8 9l14-4M8 13l14-6" stroke="#333" fill="none"/><path d="M8 13h7v6h10v7H4" fill="none" stroke="#222"/><path d="M11 19v7" stroke="#222"/></svg></div>
        <svg class="rail-ic" viewBox="0 0 28 28"><path d="M2 3h23v16H2z" fill="#fff" stroke="#222"/><path d="M2 3h23v4H2z" fill="#2d6f9a"/><path d="M2 11h23M2 15h23M9 7v12M16 7v12" stroke="#222"/><path d="M16 16c4-6 9-3 9 3l3 2-8 5-10-3z" fill="#e8892e" stroke="#444"/></svg>
        <svg class="rail-ic" viewBox="0 0 28 28"><path d="M3 8l7-4v8h4l2-7 4 4 4-4v20H3z" fill="#b4b4b4" stroke="#333"/><path d="M8 25l15-14 3 3-14 13z" fill="#fff" stroke="#333"/></svg>
        <svg class="rail-ic" viewBox="0 0 28 28"><path d="M3 5h6v6H3zM20 3h5v6h-5zM3 19h6v6H3zM20 19h5v6h-5zM9 8h4l7-2M9 22h4l7 0M11 8v14" fill="none" stroke="#333" stroke-width="1.3"/><path d="M10 9l8 10" stroke="#e8892e" stroke-width="3" stroke-dasharray="3 2"/></svg>
        <svg class="rail-ic" viewBox="0 0 28 28"><path d="M3 21C5 11 11 8 15 8l2 5-4 3 10 4-4 5H7z" fill="#a8a8a8" stroke="#333"/><ellipse cx="14" cy="20" rx="4" ry="2" fill="#ddd" stroke="#333"/><path d="M17 2l8 8M25 2l-8 8M10 5l6 5" stroke="#e8892e"/></svg>
        <svg class="rail-ic" viewBox="0 0 28 28"><path d="M3 14l9-6 11 4-11 8-8-3z" fill="#fff" stroke="#333"/><path d="M3 14v5l9 5v-4" stroke="#333" fill="#bbb"/><circle cx="19" cy="16" r="7" fill="#fff" stroke="#333"/><path d="M4 9l8-6 3 5M3 5l3 3M11 1l2 3" stroke="#e8892e" fill="none"/></svg>
        <svg class="rail-ic" viewBox="0 0 24 26"><path d="M1 1h22v24H1z" fill="#fff" stroke="#444"/><path d="M1 4h22" stroke="#444"/><circle cx="12" cy="15" r="8" fill="#3a93b5"/><path d="M8 10l5 2-3 5 4 4M15 9l2 4" stroke="#a8d8a8" stroke-width="1.5" fill="none"/></svg>
        <svg class="rail-ic" viewBox="0 0 24 26"><circle cx="12" cy="13" r="11" fill="none" stroke="#444"/><path d="M12 4v9H6M12 2v2M12 22v2M1 13h2M21 13h2" stroke="#444" fill="none"/></svg>
        <svg class="rail-ic" viewBox="0 0 24 26"><defs><linearGradient id="rb" x1="0" y1="0" x2="0" y2="1"><stop offset="0" stop-color="#e22"/><stop offset=".3" stop-color="#ee2"/><stop offset=".6" stop-color="#2c2"/><stop offset="1" stop-color="#22d"/></linearGradient></defs><rect x="1" y="1" width="8" height="24" fill="url(#rb)"/><path d="M12 8l9 15" stroke="#111" stroke-width="2.5"/><path d="M11 2l1 5" stroke="#ddd"/></svg>
        <svg class="rail-ic" viewBox="0 0 24 26"><path d="M2 2h7v20H2z" fill="#3f63c8"/><path d="M9 8l12-4M9 12l12-4M9 16l8-3" stroke="#3f63c8" fill="none"/><path d="M10 9l10 16" stroke="#111" stroke-width="2.5"/></svg>
        <svg class="rail-ic" viewBox="0 0 24 26"><path d="M1 3h4l1-2h5l1 2h11v22H1z" fill="#fff" stroke="#333"/><path d="M5 7l14 14M19 7L5 21" stroke="#333" stroke-width="3"/></svg>
        <svg class="rail-ic" viewBox="0 0 28 28"><path d="M2 8l7-4v8h4l2-7 4 4 4-4v21H2z" fill="#b0b0b0" stroke="#333"/><path d="M12 25v-4c0-4 5-6 9-6l-1-3 6 5-6 5 1-3c-3 0-5 1-5 3v3z" fill="#fff" stroke="#333"/></svg>
      </div>

      <div class="nav">
        <div class="nav-title">工序导航器</div>
        <div class="nav-tools">
          <svg class="nt"><use href="#i-nav1"/></svg>
          <svg class="nt"><use href="#i-nav2"/></svg>
          <span class="nt-on"><svg class="nt"><use href="#i-nav3"/></svg></span>
          <svg class="nt"><use href="#i-nav4"/></svg>
          <span class="nt-box"><svg class="nt"><use href="#i-dlgadd"/></svg></span>
          <span class="nt-box"><svg class="nt"><use href="#i-dlgdel"/></svg></span>
        </div>
        <div class="tree">
          <div class="tr head"><span>标题</span><span>刀轨</span><span>IPW</span><span></span></div>
          <div class="tree-body">
            <svg class="tree-lines" viewBox="0 0 100 180"><path d="M30.5 16v30M30.5 30.5h9M49.5 60v110M49.5 110.5h9M49.5 130.5h9M49.5 150.5h9M49.5 170.5h9M68.5 80v10M68.5 90.5h9" stroke="#888" stroke-dasharray="1 2" fill="none"/></svg>
            <div class="tr"><span class="n l0"><i class="box"></i>GEOMETRY</span><span></span><span></span><span></span></div>
            <div class="tr alt"><span class="n l1"><svg class="ti"><use href="#tr-folder"/></svg>未用项</span><span></span><span></span><span></span></div>
            <div class="tr"><span class="n l2"><i class="box"></i><svg class="ti"><use href="#tr-mcs"/></svg>MCS_MILL</span><span></span><span></span><span></span></div>
            <div class="tr alt"><span class="n l3"><i class="box"></i><svg class="ti"><use href="#tr-work"/></svg>WORKPIECE</span><span></span><span></span><span></span></div>
            <div class="tr"><span class="n l4"><i class="bang"></i><svg class="ti"><use href="#tr-seq"/></svg>SEQUENTIAL...</span><span><svg class="st"><use href="#ok"/></svg></span><span><svg class="st"><use href="#ok"/></svg></span><span></span></div>
            <div class="tr alt"><span class="n l5"><i class="bang"></i><svg class="ti"><use href="#tr-var"/></svg>VARIABLE_STRE...</span><span><svg class="st"><use href="#ok"/></svg></span><span><svg class="st"><use href="#no"/></svg></span><span></span></div>
            <div class="tr"><span class="n l5"><i class="bang"></i><svg class="ti"><use href="#tr-var"/></svg>VARIABLE_STRE...</span><span><svg class="st"><use href="#ok"/></svg></span><span><svg class="st"><use href="#no"/></svg></span><span></span></div>
            <div class="tr alt"><span class="n l5"><i class="bang"></i><svg class="ti"><use href="#tr-var"/></svg>VARIABLE_CON...</span><span><svg class="st"><use href="#ok"/></svg></span><span><svg class="st"><use href="#no"/></svg></span><span></span></div>
            <div class="tr tr-sel"><span class="n l5"><i class="bang"></i><svg class="ti"><use href="#tr-seq"/></svg><b>SEQUENTIAL_M...</b></span><span><svg class="st"><use href="#ok"/></svg></span><span><svg class="st"><use href="#no"/></svg></span><span></span></div>
            <div class="tr"><span></span><span></span><span></span><span></span></div><div class="tr alt"><span></span><span></span><span></span><span></span></div>
            <div class="tr"><span></span><span></span><span></span><span></span></div><div class="tr alt"><span></span><span></span><span></span><span></span></div>
            <div class="tr"><span></span><span></span><span></span><span></span></div><div class="tr alt"><span></span><span></span><span></span><span></span></div>
            <div class="tr"><span></span><span></span><span></span><span></span></div><div class="tr alt"><span></span><span></span><span></span><span></span></div>
            <div class="tr"><span></span><span></span><span></span><span></span></div><div class="tr alt"><span></span><span></span><span></span><span></span></div>
            <div class="tr"><span></span><span></span><span></span><span></span></div><div class="tr alt"><span></span><span></span><span></span><span></span></div>
            <div class="tr"><span></span><span></span><span></span><span></span></div><div class="tr alt"><span></span><span></span><span></span><span></span></div>
            <div class="tr"><span></span><span></span><span></span><span></span></div><div class="tr alt"><span></span><span></span><span></span><span></span></div>
            <div class="tr"><span></span><span></span><span></span><span></span></div><div class="tr alt"><span></span><span></span><span></span><span></span></div>
            <div class="tr"><span></span><span></span><span></span><span></span></div><div class="tr alt"><span></span><span></span><span></span><span></span></div>
            <div class="tr"><span></span><span></span><span></span><span></span></div><div class="tr alt"><span></span><span></span><span></span><span></span></div>
            <div class="tr"><span></span><span></span><span></span><span></span></div><div class="tr alt"><span></span><span></span><span></span><span></span></div>
            <div class="tr"><span></span><span></span><span></span><span></span></div>
          </div>
          <div class="hscroll"><i class="sb-l"></i><i class="sb-thumb"></i><i class="sb-r"></i></div>
        </div>
        <div class="nav-rule"></div>
      </div>

      <div class="view">
        <div class="view-tabs"></div>
        <div class="viewport">
          <svg class="model" viewBox="478 234 1364 756">
            <defs>
              <linearGradient id="tube" gradientUnits="userSpaceOnUse" x1="1115" y1="436" x2="1072" y2="704">
                <stop offset="0" stop-color="#c25c90"/><stop offset=".28" stop-color="#bf5b8e"/><stop offset=".48" stop-color="#964a74"/><stop offset=".78" stop-color="#84406a"/><stop offset="1" stop-color="#66304f"/>
              </linearGradient>
              <linearGradient id="hole" x1="0" y1="0" x2="0" y2="1"><stop offset="0" stop-color="#6f3556"/><stop offset="1" stop-color="#c8628f"/></linearGradient>
              <linearGradient id="bore" x1="0" y1="0" x2="0" y2="1"><stop offset="0" stop-color="#a5527f"/><stop offset="1" stop-color="#6f3556"/></linearGradient>
              <linearGradient id="orange" gradientUnits="userSpaceOnUse" x1="1200" y1="520" x2="930" y2="620"><stop offset="0" stop-color="#e69a4c"/><stop offset="1" stop-color="#a06a2c"/></linearGradient>
              <linearGradient id="pinkhi" x1="0" y1="0" x2="1" y2="0"><stop offset="0" stop-color="#c8639a"/><stop offset=".3" stop-color="#ff9fd0"/><stop offset=".7" stop-color="#d874a8"/><stop offset="1" stop-color="#cf6ca0"/></linearGradient>
              <linearGradient id="ygrad" gradientUnits="userSpaceOnUse" x1="901" y1="802" x2="921" y2="820"><stop offset="0" stop-color="#d3ae08"/><stop offset=".55" stop-color="#f8ee3c"/><stop offset="1" stop-color="#d3a90c"/></linearGradient>
              <linearGradient id="ygrad2" gradientUnits="userSpaceOnUse" x1="1050" y1="640" x2="1066" y2="654"><stop offset="0" stop-color="#bf9618"/><stop offset=".55" stop-color="#e8c72e"/><stop offset="1" stop-color="#c18e1c"/></linearGradient>
              <linearGradient id="stick" gradientUnits="userSpaceOnUse" x1="1252" y1="410" x2="1282" y2="428"><stop offset="0" stop-color="#8a8a8a"/><stop offset=".5" stop-color="#e8e8e8"/><stop offset="1" stop-color="#a0a0a0"/></linearGradient>
              <linearGradient id="mini" x1="0" y1="0" x2="1" y2="1"><stop offset="0" stop-color="#a9a9a9"/><stop offset=".5" stop-color="#e8dcc8"/><stop offset="1" stop-color="#9a8060"/></linearGradient>
            </defs>
            <path d="M811 261L858 270L682 469L640 520V440z" fill="#bc5a8b" stroke="#3d2232" stroke-width=".7"/>
            <path d="M640 520L815 774L769 769L640 600z" fill="#7a3a60" stroke="#3d2232" stroke-width=".7"/>
            <path d="M811 261L835 260L910 272L858 270z" fill="#c0608f" stroke="#3d2232" stroke-width=".7"/>
            <path d="M858 270L910 272L1010 418L1070 540L958 677L867 776L815 774L640 520z" fill="#cc6699" stroke="#3d2232" stroke-width=".8"/>
            <path d="M815 774L867 776L864 780L835 780L818 777z" fill="#b1588a" stroke="#3d2232" stroke-width=".7"/>
            <path d="M855 275L682 466" stroke="#f786b8" stroke-width="5" fill="none"/>
            <ellipse cx="881" cy="329" rx="23" ry="29.5" fill="url(#hole)" stroke="#2e1c26" stroke-width=".8"/>
            <ellipse cx="707" cy="518" rx="23" ry="29.5" fill="url(#hole)" stroke="#2e1c26" stroke-width=".8"/>
            <ellipse cx="846" cy="721" rx="23" ry="29.5" fill="url(#hole)" stroke="#2e1c26" stroke-width=".8"/>
            <path d="M1228 449L1286 385L1301 395L1254 452z" fill="url(#stick)" stroke="#666" stroke-width=".5"/>
            <ellipse cx="1293" cy="390" rx="5" ry="9.5" transform="rotate(-30 1293 390)" fill="#c7c7c7" stroke="#333"/>
            <path d="M869 391L1472 489L1443 756L841 658C745 640 700 450 869 391z" fill="url(#tube)"/>
            <path d="M1007 413L1472 489M1443 756L841 658C745 640 700 450 869 391" fill="none" stroke="#2e1c26" stroke-width=".8"/>
            <path d="M869 391L1007 413" fill="none" stroke="#7a3f5e" stroke-width=".6"/>
            <path d="M1119 519L1311 550Q1322 552 1322 561Q1320 590 1300 601L1108 570L890 648L845 644Q815 630 798 604Q802 600 809 601L855 606z" fill="#6d3250" stroke="#2a1823" stroke-width=".9"/>
            <path d="M884 601L967 567L1116 538L1322 561Q1320 590 1300 601L1108 570Q1030 596 990 605Q950 612 915 608z" fill="url(#orange)"/>
            <path d="M798 604Q802 600 809 601L855 606L915 608L890 648L845 644Q815 630 798 604z" fill="url(#pinkhi)"/>
            <path d="M836 640L855 607M890 648L918 609M895 648L923 609" stroke="#5a3048" stroke-width=".7" fill="none"/>
            <path d="M967 567L1010 554L1012 562L973 574z" fill="#8fb0c6" stroke="#4d6b7c" stroke-width=".5"/>
            <path d="M858 606L875 601L865 614z" fill="#8fb0c6" stroke="#4d6b7c" stroke-width=".5"/>
            <path d="M1116 526L1122 520L1165 535L1159 544z" fill="#8fb0c6" stroke="#4d6b7c" stroke-width=".5"/>
            <path d="M1116 544L1156 554L1154 576L1110 570z" fill="#8fb0c6" stroke="#4d6b7c" stroke-width=".5"/>
            <path d="M1146 568L1160 534L1169 538L1156 574z" fill="url(#mini)"/>
            <path d="M1122 549L1166 556L1158 562z" fill="#ee9a3e"/>
            <ellipse cx="1457" cy="622" rx="104" ry="135" transform="rotate(7 1457 622)" fill="#cc6699" stroke="#2e1c26" stroke-width=".9"/>
            <ellipse cx="1458" cy="624" rx="57" ry="72" transform="rotate(5 1458 624)" fill="url(#bore)" stroke="#2e1c26" stroke-width=".9"/>
            <ellipse cx="1476" cy="625" rx="57" ry="71" transform="rotate(5 1476 625)" fill="#cc6699" stroke="#2e1c26" stroke-width=".9"/>
            <path d="M682 335L1128 508V519M682 358L1108 522" fill="none" stroke="#f2a958" stroke-width="1.3" stroke-dasharray="6 4"/>
            <path d="M1119 652L1086 761" stroke="#e8b040" stroke-width="1" fill="none"/>
            <path d="M781 932L1008 686L1034 690L801 950z" fill="url(#ygrad)"/>
            <path d="M1008 686L1085 602L1100 586L1109 601L1102 611L1034 690z" fill="url(#ygrad2)"/>
            <ellipse cx="791" cy="941" rx="13.5" ry="4.5" transform="rotate(42 791 941)" fill="#c6a40b" stroke="#6d5d12" stroke-width=".7"/>
            <g class="wcs">
              <path d="M1455 622L1406 547" stroke="#6a8d54" stroke-width="2" fill="none"/><path d="M1406 547L1414 566L1402 562z" fill="#3a8a3a"/>
              <path d="M1455 622L1521 552" stroke="#7a97ee" stroke-width="2" fill="none"/><path d="M1521 552L1512 573L1505 566z" fill="#1e62e0"/>
              <path d="M1455 622L1395 613" stroke="#e0a0a0" stroke-width="2.5" fill="none"/>
              <text x="1407" y="543" fill="#5a8d5a">YM</text>
              <text x="1500" y="548" fill="#2a3ae0">ZM</text>
              <text x="1429" y="579" fill="#6a8d44">YC</text>
              <text x="1471" y="581" fill="#4a5ae0">ZC</text>
              <text x="1393" y="610" fill="#d84a4a">XM</text>
              <text x="1421" y="615" fill="#d84a4a">XC</text>
            </g>
            <path d="M547 882L571 856L596 860L615 888L590 916L567 912zM547 882L571 887L596 860M571 887L590 916" fill="none" stroke="#aaa"/>
            <path d="M571 872L552 843" stroke="#2a7a2a" stroke-width="4"/><path d="M546 834L559 843L549 849z" fill="#2a7a2a"/>
            <path d="M600 865L618 845" stroke="#1650d0" stroke-width="4"/><path d="M624 838L621 852L612 844z" fill="#1650d0"/>
            <path d="M539 878L549 873L549 881z" fill="#c22"/>
            <g class="triad">
              <text x="537" y="833" fill="#4a8a5a">Y</text>
              <text x="625" y="837" fill="#3a5ae0">Z</text>
              <text x="529" y="883" fill="#c44">X</text>
            </g>
          </svg>
        </div>
      </div>
      <div class="strip">
        <svg class="strip-ic" viewBox="0 0 26 24"><path d="M16 7l3 7 7 1-5 4 1 5-6-3-6 3 1-5-5-4 7-1z" fill="#f2d868" stroke="#c8b060" stroke-width=".5"/><path d="M8 4c4-3 10-3 13-1l-5 4-6 1z" fill="#e0b590"/><path d="M20 1l4 2-3 4-3-2z" fill="#3a3ab0"/><path d="M1 9h7M3 13h6M4 17h7" stroke="#7cb0d0" stroke-width="1.2"/></svg>
        <i class="strip-line"></i>
        <i class="strip-toggle"></i>
      </div>
    </div>

    <div class="status"><span class="st-l">指定检查面</span><span class="st-c">创建子工序 2, 共 2 个</span></div>

    <div class="dlg">
      <div class="dlg-head">
        <svg class="dlg-gear" viewBox="0 0 16 16"><circle cx="8" cy="8" r="4" fill="none" stroke="#fff" stroke-width="2.5"/><path d="M8 0v3M8 13v3M0 8h3M13 8h3M2.5 2.5l2 2M11.5 11.5l2 2M13.5 2.5l-2 2M4.5 11.5l-2 2" stroke="#fff" stroke-width="2"/></svg>
        <span class="dlg-title">连续刀轨运动</span>
        <span class="dlg-q">?</span>
        <svg class="dlg-x" viewBox="0 0 12 12"><path d="M1 1l10 10M11 1L1 11" stroke="#fff" stroke-width="1.7"/></svg>
        <svg class="dlg-tabi" viewBox="0 0 12 12"><path d="M1 3h7v8H1zM4 3V1h7v7H8" fill="none" stroke="#fff" stroke-width="1.3"/></svg>
        <svg class="dlg-tabx" viewBox="0 0 10 10"><path d="M1 1l8 8M9 1L1 9" stroke="#fff" stroke-width="1.3"/></svg>
      </div>
      <div class="dlg-body">
        <div class="d-row1">
          <div class="sel w50"><span class="focus">插入</span><i class="tri"></i></div>
          <div class="sel w75"><span>连续刀轨</span><i class="tri"></i></div>
        </div>
        <div class="d-area"><p>SEQUENTIAL_MILL_1 - 工序参数</p><p class="ind">1&nbsp;&nbsp;Eng</p></div>
        <div class="d-3 mt3"><button class="btn">重播</button><button class="btn">列表</button><button class="btn off">删除</button></div>
        <hr class="sep mt4">
        <label class="d-check mt3"><i class="cb"></i><span>定制切削进给率</span></label>
        <div class="d-line h23 mt3 grey"><span>进给率 (mmpm)</span><span class="d-input">250.0000(</span></div>
        <hr class="sep mt2">
        <div class="d-line h24 mt4"><span>方向</span><div class="sel w51"><span>矢量</span><i class="tri"></i></div></div>
        <button class="btn full mt2 h28">反向</button>
        <hr class="sep mt3">
        <div class="d-line h25 mt3"><span>驱动面</span><div class="sel w99"><span>上一个驱动面</span><i class="tri"></i></div></div>
        <div class="d-line h25 mt2"><span>部件面</span><div class="sel w99"><span>上一个部件面</span><i class="tri"></i></div></div>
        <hr class="sep mt2">
        <div class="d-tab mt4"><button class="btn tabbtn">检查面</button><span class="d-undef">- 未定义</span></div>
        <hr class="sep">
        <div class="d-line h25 mt3"><span>刀轴</span><div class="sel w50"><span>4 轴</span><i class="tri"></i></div></div>
        <div class="d-state mt2">状态：相切于部件面</div>
        <hr class="sep mt3">
        <button class="btn full mt3">显示刀具</button>
        <hr class="sep mt3">
        <div class="d-2 mt2"><button class="btn">后处理</button><button class="btn">选项</button></div>
        <hr class="sep mt4">
        <button class="btn full mt3">结束工序</button>
        <div class="d-ok"><button class="btn ok off">确定</button><button class="btn ok">返回</button><button class="btn ok">取消</button></div>
      </div>
    </div>

    <div class="upload">
      <span class="up-logo"><svg class="up-ic" viewBox="0 0 24 22"><circle cx="12" cy="7" r="4.5" fill="none" stroke="#fff" stroke-width="3"/><circle cx="6.5" cy="15" r="4.5" fill="none" stroke="#fff" stroke-width="3"/><circle cx="17.5" cy="15" r="4.5" fill="none" stroke="#fff" stroke-width="3"/></svg></span>
      <span class="up-t">拖拽上传</span>
    </div>
  </div>

  <div class="ime-tip">点我设置</div>
  <div class="ime">
    <span class="ime-s">S</span><span class="ime-en">英</span>
    <svg class="ime-i" viewBox="0 0 16 16"><path d="M10 1a7 7 0 0 1-7 13A7 7 0 1 0 10 1z" fill="#3f8ac6"/></svg>
    <span class="ime-p">°,</span>
    <svg class="ime-i" viewBox="0 0 16 16"><path d="M0 3h16v10H0z" fill="#3f8ac6"/><path d="M2 5h2v2H2zM5 5h2v2H5zM8 5h2v2H8zM11 5h2v2h-2zM2 8h2v2H2zM5 8h6v2H5z" fill="#fff"/></svg>
    <svg class="ime-i" viewBox="0 0 16 16"><circle cx="8" cy="4" r="3" fill="#ccc"/><path d="M3 15c0-9 10-9 10 0z" fill="#ccc"/></svg>
    <svg class="ime-i" viewBox="0 0 16 16"><path d="M5 1L1 4l2 3 1-1v9h8V6l1 1 2-3-4-3-3 2z" fill="#3f8ac6"/></svg>
    <svg class="ime-i" viewBox="0 0 16 16"><path d="M14 1l-3 4 1 3 3-2c1 3-3 6-5 4l-6 6-3-3 6-6C6 5 10 0 14 1z" fill="#3f8ac6"/></svg>
  </div>
  <div class="float-pill"><svg class="fp-ic" viewBox="0 0 24 24"><path d="M3 3l10-2 2 14-10 2z" fill="#7d67e8"/><path d="M7 7h13v14H7z" fill="#b8aef5"/><path d="M11 12h6M11 15h4" stroke="#fff"/></svg></div>

  <div class="taskbar">
    <svg class="tb-win" viewBox="0 0 20 20"><path d="M1 3l8-1v8H1zM10 2l9-1v9h-9zM1 11h8v7l-8-1zM10 11h9v8l-9-1z" fill="#fff"/></svg>
    <svg class="tb-srch" viewBox="0 0 20 20"><circle cx="10" cy="9" r="7.5" fill="none" stroke="#fff" stroke-width="1.4"/><path d="M12 7v4H8M14 15l3 4" stroke="#fff" stroke-width="1.4" fill="none"/></svg>
    <svg class="tb-wheel" viewBox="0 0 24 24"><circle cx="12" cy="12" r="11" fill="#e8434f"/><path d="M12 1a11 11 0 0 1 11 11H12z" fill="#f2b124"/><path d="M23 12a11 11 0 0 1-11 11V12z" fill="#35b668"/><path d="M12 23A11 11 0 0 1 1 12h11z" fill="#3f7ee8"/><circle cx="12" cy="12" r="5" fill="#fff"/></svg>
    <div class="task"><svg class="task-e" viewBox="0 0 24 24"><circle cx="12" cy="12" r="11" fill="#6cc04a"/><circle cx="12" cy="12" r="7" fill="#f4f4f4"/><path d="M6 13h12M9 9h7" stroke="#3a8a30" stroke-width="2"/></svg><span>顺序铣进刀问题 ...</span></div>
    <div class="task"><svg class="task-ic"><use href="#xl"/></svg><span>配刀清单2021.7(...</span></div>
    <div class="task"><svg class="task-ic"><use href="#xl"/></svg><span>07工装模具台帐...</span></div>
    <div class="task"><svg class="task-ic"><use href="#xl"/></svg><span>刀具清单 - .xlsx ...</span></div>
    <div class="task"><span class="nxi">NX</span><span>NX - 加工</span></div>
    <div class="task vv"><svg class="task-ic"><use href="#vr"/></svg><span>(64)&nbsp; 9.2.2 by C...</span></div>
    <div class="task vv"><svg class="task-ic"><use href="#vr"/></svg><span>(64)&nbsp; 9.1.1 by C...</span></div>
    <div class="task"><svg class="task-ic" viewBox="0 0 24 24"><rect width="24" height="24" fill="#b02020"/><path d="M2 2l20 20M22 2L2 22M12 0v24M0 12h24" stroke="#333" stroke-width="2"/><circle cx="12" cy="12" r="5" fill="#e04030"/></svg><span>CIMCO Edit v5....</span></div>
    <div class="task cur"><span class="nxi">NX</span><span>NX - 加工</span></div>
    <div class="tray">
      <span class="tray-ch">CH</span>
      <span class="tray-s">S</span>
      <span class="tray-i"><svg viewBox="0 0 16 20"><rect x="2" width="12" height="20" rx="6" fill="#1e78d8"/><path d="M5 6l6 7-3 3V4l3 3-6 7" stroke="#fff" fill="none"/></svg></span>
      <span class="tray-i"><svg viewBox="0 0 16 20"><rect y="2" width="16" height="16" rx="3" fill="#fff"/><rect x="4" y="5" width="8" height="10" fill="#3aa4e8"/></svg></span>
      <span class="tray-i"><svg viewBox="0 0 16 20"><rect y="2" width="16" height="16" fill="#111"/><path d="M3 10c3-4 7-4 10 0-3 4-7 4-10 0z" fill="#76b900"/></svg></span>
      <span class="tray-i"><svg viewBox="0 0 16 20"><rect y="1" width="16" height="18" fill="#eee"/><path d="M3 10l8-6v6z" fill="#c22"/></svg></span>
      <span class="tray-i"><svg viewBox="0 0 16 20"><circle cx="8" cy="10" r="7.5" fill="#6cc04a"/><path d="M4 10h8M5 7h6M5 13h6" stroke="#fff"/></svg></span>
      <span class="tray-i"><svg viewBox="0 0 16 20"><rect y="2" width="16" height="16" rx="3" fill="#fff"/><circle cx="8" cy="7" r="2.5" fill="none" stroke="#3a8ee8"/><circle cx="5" cy="12" r="2.5" fill="none" stroke="#3a8ee8"/><circle cx="11" cy="12" r="2.5" fill="none" stroke="#3a8ee8"/></svg></span>
      <span class="tray-i"><svg viewBox="0 0 16 20"><circle cx="8" cy="10" r="7.5" fill="#8fc31f"/><circle cx="8" cy="10" r="5" fill="#f4d41c"/><path d="M5 10h6M8 7v6" stroke="#222" stroke-width="1.5"/></svg></span>
      <span class="tray-i"><svg viewBox="0 0 16 20"><circle cx="8" cy="10" r="6" fill="#333" stroke="#aaa"/><path d="M3 3l10 14" stroke="#ddd"/></svg></span>
      <span class="tray-i"><svg viewBox="0 0 16 20"><path d="M1 3h14v11H1zM5 17h6" fill="none" stroke="#ddd"/></svg></span>
      <span class="tray-i"><svg viewBox="0 0 16 20"><path d="M1 8h3l5-4v12l-5-4H1zM11 7c2 2 2 4 0 6" fill="none" stroke="#ddd"/></svg></span>
      <span class="tray-i"><svg viewBox="0 0 16 20"><circle cx="8" cy="10" r="7" fill="#888"/></svg></span>
    </div>
    <div class="clock"><span>17:18 周三</span><span>2023/0/38</span></div>
    <div class="wm">UG爱好者论坛 @38963</div>
  </div>
</div>
</body>
</html>
```

FILE: styles.css
```css
* { box-sizing: border-box; }
html, body { margin: 0; padding: 0; }
body { width: 1920px; height: 1080px; overflow: hidden; font-family: "Noto Sans CJK SC", "Noto Sans", "Liberation Sans", sans-serif; font-size: 12px; color: #222; background: #fff; }
.defs { position: absolute; width: 0; height: 0; }
i { display: block; font-style: normal; }
svg { display: block; flex: none; }
p { margin: 0; }

.desktop { position: relative; width: 1920px; height: 1080px; overflow: hidden; }
.browser { height: 1040px; display: flex; flex-direction: column; background: #f4f4f4; }

/* browser tabs */
.tabbar { height: 34px; display: flex; background: #e7e7e7; color: #555; }
.edge-logo { width: 44px; padding: 7px 0 0 7px; }
.edge-ic { width: 28px; height: 28px; }
.tab-nav { width: 18px; height: 18px; margin: 8px 0 0 10px; }
.tabs { display: flex; margin-left: 12px; }
.tab { width: 86px; height: 22px; padding: 9px 0 0 12px; display: flex; align-items: flex-start; border-right: 1px solid #d2d2d2; font-size: 13px; border-radius: 6px 6px 0 0; }
.tab.active { background: #fff; margin-top: 2px; padding-top: 7px; height: 24px; }
.tab-ic { width: 16px; height: 16px; }
.tab-t { width: 33px; margin-left: 4px; line-height: 16px; overflow: hidden; white-space: nowrap; color: #666; }
.tab-x { margin-left: 4px; line-height: 16px; font-family: "Liberation Sans", sans-serif; }
.tab-add { margin: 5px 0 0 10px; font: 24px/24px "Liberation Sans", sans-serif; color: #444; }
.win-ctl { margin-left: 54px; display: flex; align-items: center; height: 28px; padding-top: 2px; color: #555; }
.badge18 { width: 20px; height: 24px; border: 1px solid #666; font: 12px/22px "Liberation Sans", sans-serif; text-align: center; }
.ctl-ic { width: 14px; height: 18px; margin-left: 20px; }
.ctl-min { width: 10px; height: 1px; background: #555; margin-left: 25px; margin-right: -3px; }
.ctl-x { margin-left: 28px; font: 18px "Liberation Sans", sans-serif; color: #888; }

.addr { height: 68px; background: #fff; position: relative; display: flex; justify-content: space-between; }
.addr-left { padding: 10px 0 0 14px; }
.back { width: 15px; height: 15px; }
.fav { position: absolute; left: 11px; top: 44px; display: flex; align-items: center; gap: 2px; font-size: 12px; }
.star { width: 18px; height: 18px; }
.burger { margin: 11px 14px 0 0; width: 13px; display: flex; flex-direction: column; gap: 4px; }
.burger i { height: 3px; background: #555; }

.page { flex: 1; position: relative; background: #f2f2f2; }
.side-online { position: absolute; left: 5px; top: 198px; width: 33px; height: 132px; background: #f8f8f8; clip-path: polygon(0 0, 100% 12%, 100% 90%, 0 100%); color: #f07a2a; }
.online-tab { display: flex; flex-direction: column; align-items: center; padding-top: 32px; font-size: 16px; line-height: 19px; font-weight: 700; width: 28px; }
.online-arrow { position: absolute; right: 0; top: 66px; border-right: 6px solid #f07a2a; border-top: 5px solid transparent; border-bottom: 5px solid transparent; }
.page-scroll { position: absolute; right: 2px; top: 0; bottom: 0; width: 13px; background: #efefef; }
.thumb-main { position: absolute; left: 0; right: 0; top: 235px; height: 105px; background: #bebebe; }
.thumb-low { position: absolute; left: 6px; width: 2px; top: 626px; height: 46px; background: #666; }
.thumb-green { position: absolute; left: 6px; width: 3px; top: 672px; height: 14px; background: #3cc46a; }

.suggest { height: 22px; display: flex; padding-left: 223px; gap: 8px; background: #f4f4f4; font-size: 12px; color: #666; }
.pill { height: 30px; margin-top: -11px; background: #fff; border-radius: 15px; display: flex; align-items: center; gap: 6px; padding-left: 14px; white-space: nowrap; flex: none; }
.pill-round { width: 30px; padding: 0; justify-content: center; }
.pill-mg { width: 14px; height: 14px; }
.gap-right { margin-left: 27px; }
.p76 { width: 76px; } .p83 { width: 83px; } .p100 { width: 100px; } .p110 { width: 110px; } .p125 { width: 125px; } .p150 { width: 150px; } .p173 { width: 173px; } .p177 { width: 177px; }
.dot { width: 18px; height: 18px; border-radius: 50%; font: 700 11px/18px "Liberation Sans", sans-serif; text-align: center; color: #fff; flex: none; }
.dot-s { width: 6px; margin-right: -4px; }
.d-gray { background: #d4d4d4; } .d-black { background: #222; } .d-blue { background: #3a20c8; } .d-orange { background: #c88a22; } .d-green { background: #7edc8c; }

/* NX window */
.nx { position: absolute; left: 38px; top: 21px; width: 1844px; height: 997px; padding: 0 4px; background: linear-gradient(90deg, #0a6a8c, #0878a2); display: flex; flex-direction: column; color: #222; }
.nx-title { height: 36px; flex: none; display: flex; align-items: center; color: #fff; position: relative; }
.nx-logo { width: 36px; margin-left: 4px; font: 700 23px/36px "Liberation Sans", sans-serif; letter-spacing: -1px; }
.qa { display: flex; align-items: center; margin-left: 14px; height: 28px; gap: 7px; }
.qa-ic { width: 17px; height: 20px; }
.qa-ic.cube { width: 16px; height: 21px; }
.qa-caret { width: 6px; height: 4px; margin-left: -1px; }
.qa-sep { width: 1px; height: 22px; background: #2a7f9e; }
.qs-m5 { margin-right: -5px; } .qs-p2 { margin-right: 2px; } .qs-m3 { margin-right: -3px; }
.qa-win { width: 14px; height: 18px; }
.qa-txt { font-size: 12px; margin-left: -4px; }
.nx-name { position: absolute; left: 1023px; top: 8px; font-size: 13px; line-height: 20px; }
.nx-winbtns { position: absolute; right: 8px; top: 8px; display: flex; align-items: center; gap: 12px; }
.nx-restore { width: 8px; height: 12px; border: 1px solid #fff; }
.nx-close { font: 18px/20px "Liberation Sans", sans-serif; }
.nx-menu { height: 28px; flex: none; display: flex; align-items: flex-start; color: #f2f6f8; font-size: 13px; position: relative; }
.mi { padding: 0 16px; height: 26px; line-height: 26px; white-space: nowrap; }
.mi-file { padding: 0 16px 0 20px; margin-right: 8px; }
.mi.on { color: #dcebb0; border-bottom: 2px solid #dce4a8; }
.search { position: absolute; left: 1547px; top: 3px; display: flex; align-items: flex-start; }
.search-box { width: 177px; height: 20px; background: #fff; border: 1px solid #bbb; display: flex; align-items: center; justify-content: space-between; font-size: 11px; color: #aaa; padding: 0 3px 0 1px; }
.mag { width: 13px; height: 18px; }
.sr-ic { width: 16px; height: 16px; margin: 2px 0 0 10px; }
.sr-bang { width: 2px; height: 24px; background: #2c90b4; margin: -1px 0 0 16px; }

/* ribbon */
.ribbon { height: 94px; flex: none; background: #fff; border-bottom: 1px solid #ddd; display: flex; align-items: flex-start; padding-top: 5px; }
.g { height: 84px; border-right: 1px solid #ddd; display: flex; flex-direction: column; }
.g1 { width: 218px; } .g2 { width: 268px; } .g3 { width: 54px; } .g4 { width: 300px; } .g5 { width: 303px; } .g6 { width: 215px; } .g7 { width: 151px; } .g8 { width: 112px; } .g9 { width: 160px; }
.g-body { height: 72px; display: flex; align-items: flex-start; flex: none; }
.g-foot { height: 16px; display: flex; align-items: center; color: #1a6f8e; font-size: 12px; line-height: 16px; position: relative; top: -1px; }
.g-foot span { flex: 1; text-align: center; white-space: nowrap; }
.g-foot .car { margin-right: 8px; }
.g-end { flex: 1; height: 84px; display: flex; align-items: flex-end; justify-content: flex-end; padding: 0 6px 5px 0; }
.g1 .g-body { padding-left: 12px; gap: 6px; }
.g2 .g-body { padding-left: 10px; gap: 5px; }
.g3 .g-body { padding-left: 4px; }
.g4 .g-body { padding-left: 10px; gap: 2px; }
.g5 .g-body { padding-left: 10px; gap: 1px; }
.car { width: 0; height: 0; border-left: 3.5px solid transparent; border-right: 3.5px solid transparent; border-top: 4px solid #222; flex: none; }
.car.gray { border-top-color: #aaa; }
.car-b { margin-top: 4px; }
.rb { display: flex; flex-direction: column; align-items: center; text-align: center; font-size: 11px; line-height: 16px; white-space: nowrap; }
.rb.dis, .dis { color: #c8c8c8; }
.rb.hi { background: #cde3ea; margin-top: -3px; padding-top: 3px; height: 74px; }
.w36 { width: 36px; } .w40 { width: 40px; } .w46 { width: 46px; } .w48 { width: 48px; } .w50 { width: 50px; } .w51 { width: 51px; } .w58 { width: 58px; } .w60 { width: 60px; } .w64 { width: 64px; } .w75 { width: 75px; } .w76 { width: 76px; } .w99 { width: 99px; }
.ml8 { margin-left: 8px; }
.ic34 { width: 42px; height: 36px; }
.ic24 { width: 24px; height: 24px; }
.ic20 { width: 20px; height: 20px; }
.ic-cmd { width: 22px; height: 22px; }
.stack-ic { display: flex; flex-direction: column; gap: 14px; }
.mini { display: flex; flex-direction: column; font-size: 11px; gap: 2px; margin-top: -3px; }
.mini-i { display: flex; align-items: center; height: 21px; white-space: nowrap; }
.mini-i span { margin-left: 1px; }
.disp-col { width: 60px; padding-left: 4px; display: flex; flex-direction: column; }
.disp-box { width: 31px; height: 32px; background: #cde3ea; display: flex; justify-content: center; align-items: center; }
.ic-box { width: 26px; height: 28px; }
.disp-tool { display: flex; align-items: center; margin: 6px 0 0 5px; gap: 8px; }
.ic-tool { width: 22px; height: 26px; }
.arrows { width: 24px; display: flex; flex-direction: column; align-items: center; gap: 8px; }
.ic-ar { width: 20px; height: 17px; }
.anim { padding-left: 13px; }
.anim-grid { display: grid; grid-template-columns: 24px 24px 24px 24px; grid-auto-rows: 24px; row-gap: 11px; align-items: center; padding-top: 4px; }
.anim-grid .car { margin-left: 8px; }
.circ { width: 24px; height: 24px; }
.speed { margin-top: 13px; width: 96px; display: flex; flex-direction: column; align-items: center; font-size: 11px; line-height: 16px; }
.track { width: 96px; height: 5px; background: #a8a8a8; position: relative; }
.knob { position: absolute; left: 39px; top: -6px; width: 8px; height: 17px; background: #0f6a8a; }
.speed span { margin-top: 9px; }
.tools { flex-direction: column; padding: 6px 0 0 6px; gap: 11px; }
.tb-row { display: flex; align-items: center; gap: 4px; }
.tb-sep { width: 1px; height: 18px; background: #ddd; }
.tools2 { display: flex; flex-direction: column; gap: 3px; }
.g8 .tools2 { padding: 0 0 0 5px; }
.tl { height: 32px; display: flex; align-items: center; font-size: 11px; white-space: nowrap; gap: 2px; }
.tl .car { margin-left: 8px; }
.ic-l { width: 32px; height: 32px; }
.feat { padding-left: 6px; }
.f-col { width: 110px; }
.g9 .ic-l { width: 30px; }

/* command row */
.cmd { height: 28px; flex: none; background: #fff; border-bottom: 1px solid #aaa; display: flex; align-items: center; padding-left: 12px; position: relative; }
.cmd-bur { width: 13px; height: 12px; }
.cmd-menu { margin-left: 4px; font-size: 11px; margin-right: 5px; white-space: nowrap; }
.cmd-sep { width: 1px; height: 20px; background: #ddd; margin: 0 11px 0 9px; }
.cmd-sep.s2 { margin: 0 9px 0 10px; }
.combo { height: 22px; border: 1px solid #bbb; background: #f8f8f8; display: flex; align-items: center; justify-content: space-between; padding: 0 6px 0 3px; font-size: 11px; color: #aaa; }
.c149 { width: 149px; } .c156 { width: 156px; }
.cmd-fn { width: 16px; height: 18px; margin: 0 11px 0 6px; }
.cmd-on { width: 23px; height: 23px; background: #cde3ea; margin-right: 2px; display: flex; align-items: center; justify-content: center; }
.cmd-pc { width: 16px; height: 20px; margin-left: 2px; }
.end-car { position: absolute; right: 6px; top: 12px; }

/* main */
.nx-main { flex: 1; min-height: 0; display: flex; background: #fff; }
.rail { width: 32px; flex: none; background: #dcdcdc; display: flex; flex-direction: column; align-items: center; padding-top: 5px; }
.rail-ic { width: 27px; height: 27px; }
.r-gear { width: 15px; height: 15px; margin-right: 3px; }
.rail > :nth-child(2) { margin-top: 27px; }
.rail > :nth-child(3) { margin-top: 17px; }
.rail > :nth-child(4) { margin-top: 6px; }
.rail > :nth-child(5) { margin-top: 7px; }
.rail > :nth-child(6) { margin-top: 14px; }
.rail > :nth-child(7) { margin-top: 15px; }
.rail > :nth-child(8) { margin-top: 15px; }
.rail > :nth-child(9) { margin-top: 17px; }
.rail > :nth-child(10) { margin-top: 26px; }
.rail > :nth-child(11) { margin-top: 24px; }
.rail > :nth-child(12) { margin-top: 18px; }
.rail > :nth-child(13) { margin-top: 16px; }
.rail > :nth-child(14) { margin-top: 16px; }
.rail > :nth-child(15) { margin-top: 14px; }
.rail-act { width: 30px; height: 45px; background: #fff; margin-left: 2px; display: flex; align-items: center; justify-content: center; }

.nav { width: 404px; flex: none; background: #fff; padding: 4px 0 0 10px; display: flex; flex-direction: column; position: relative; border-right: 1px solid #bbb; }
.nav-title { font-size: 12px; line-height: 20px; }
.nav-tools { display: flex; align-items: center; height: 32px; margin-top: 8px; padding-left: 3px; gap: 8px; }
.nt { width: 26px; height: 28px; }
.nt-on { width: 32px; height: 32px; background: #cde3ea; display: flex; align-items: center; justify-content: center; margin: 0 -3px; }
.nt-box { width: 32px; height: 32px; border: 1px solid #d8d8d8; display: flex; align-items: center; justify-content: center; margin-right: -4px; }
.tree { margin-top: 3px; width: 381px; height: 705px; border: 1px solid #ddd; padding: 0 1px; display: flex; flex-direction: column; }
.tr { display: grid; grid-template-columns: 199px 50px 50px 1fr; height: 20px; flex: none; border-bottom: 1px solid #eee; background: #fff; }
.tr.alt { background: #fafafa; }
.tr > span { display: flex; align-items: center; white-space: nowrap; }
.tr > span:nth-child(2) { border-left: 1px solid #000; }
.tr > span:nth-child(3) { border-left: 1px solid #e8e8e8; }
.tr > span:nth-child(4) { border-left: 1px solid #e8e8e8; }
.tr.head { height: 21px; background: #f0f0f0; font-size: 12px; }
.tr.head > span { padding-left: 6px; border-left-color: #ddd; }
.tree-body { height: 664px; overflow: hidden; position: relative; font-family: "Noto Sans", "Noto Sans CJK SC", sans-serif; font-size: 13px; }
.tree-lines { position: absolute; left: 0; top: 0; width: 100px; height: 180px; z-index: 1; }
.n { position: relative; z-index: 2; }
.l0 { padding-left: 6px; } .l1 { padding-left: 37px; } .l2 { padding-left: 25px; } .l3 { padding-left: 44px; } .l4 { padding-left: 84px; } .l5 { padding-left: 64px; }
.box { width: 9px; height: 9px; border: 1px solid #888; background: #fff; position: relative; margin-right: 8px; flex: none; }
.box::after { content: ""; position: absolute; left: 1px; right: 1px; top: 3px; height: 1px; background: #222; }
.l2 .box, .l3 .box { margin-right: 3px; }
.ti { width: 17px; height: 16px; margin-right: 2px; }
.bang { width: 2px; height: 14px; background: #f0a030; margin-right: 7px; flex: none; }
.st { width: 16px; height: 14px; margin-left: 4px; }
.tr.tr-sel, .tr.tr-sel > span { background: #cde3ea; }
.tr.tr-sel > span:first-child { background: linear-gradient(90deg, #fff 90px, #cde3ea 90px); }
.tr.tr-sel b { font-weight: 700; font-size: 12.5px; }
.hscroll { height: 16px; margin-top: 1px; background: #f0f0f0; display: flex; align-items: center; padding: 0 5px; }
.sb-l { border-right: 5px solid #555; border-top: 4px solid transparent; border-bottom: 4px solid transparent; }
.sb-thumb { width: 21px; height: 16px; background: #c8c8c8; margin-left: 7px; }
.sb-r { margin-left: auto; border-left: 5px solid #555; border-top: 4px solid transparent; border-bottom: 4px solid transparent; }
.nav-rule { width: 389px; margin: 4px 0 0 -4px; height: 1px; background: #ccc; }

.view { width: 1364px; flex: none; display: flex; flex-direction: column; }
.view-tabs { height: 27px; flex: none; background: #fff; border-bottom: 2px solid #0a6a8c; }
.viewport { flex: 1; background: #d4d4d4; overflow: hidden; }
.model { width: 1364px; height: 756px; }
.wcs text { font: 12px "Liberation Sans", sans-serif; }
.triad text { font: 12px "Liberation Sans", sans-serif; }
.strip { flex: 1; background: #fff; display: flex; flex-direction: column; align-items: center; position: relative; padding-top: 14px; }
.strip-ic { width: 26px; height: 24px; }
.strip-line { width: 27px; height: 1px; background: #ddd; margin-top: 7px; }
.strip-toggle { position: absolute; left: 9px; bottom: 6px; border-right: 4px solid #222; border-top: 3px solid transparent; border-bottom: 3px solid transparent; }

.status { height: 22px; flex: none; background: #fff; border-top: 1px solid #aaa; display: flex; align-items: center; padding: 0 0 3px 2px; position: relative; font-size: 11px; }
.st-c { position: absolute; left: 892px; white-space: nowrap; }
.nx::after { content: ""; height: 6px; flex: none; background: #006589; }

/* dialog */
.dlg { position: absolute; left: 322px; top: 186px; width: 356px; }
.dlg-head { height: 24px; background: #005f85; color: #fff; display: flex; align-items: center; position: relative; }
.dlg-gear { width: 14px; height: 14px; margin-left: 7px; }
.dlg-title { margin-left: 8px; font-size: 13px; }
.dlg-q { position: absolute; left: 279px; font: 700 15px "Liberation Sans", sans-serif; }
.dlg-x { position: absolute; left: 301px; width: 12px; height: 12px; }
.dlg-tabi { position: absolute; left: 326px; width: 11px; height: 11px; }
.dlg-tabx { position: absolute; left: 343px; width: 9px; height: 9px; }
.dlg-body { width: 321px; height: 572px; background: #f0f0f0; box-shadow: 0 0 2px rgba(0, 0, 0, .25); padding: 8px 9px 0 10px; display: flex; flex-direction: column; font-size: 12px; color: #333; }
.mt2 { margin-top: 2px; } .mt3 { margin-top: 3px; } .mt4 { margin-top: 4px; }
.d-row1 { display: flex; gap: 3px; margin-left: 87px; height: 25px; }
.sel { height: 100%; background: #fff; border: 1px solid #777; display: flex; align-items: center; justify-content: space-between; padding: 0 7px 0 4px; white-space: nowrap; font-size: 11.5px; }
.focus { outline: 1px dotted #222; padding: 0 1px; }
.tri { width: 0; height: 0; border-left: 4px solid transparent; border-right: 4px solid transparent; border-top: 4px solid #222; }
.d-area { height: 91px; margin-top: 2px; border: 1px solid #ddd; padding: 0 2px; color: #888; font-size: 12px; letter-spacing: .3px; line-height: 18px; white-space: nowrap; }
.ind { padding-left: 9px; }
.btn { height: 29px; background: #f0f0f0; border: 1px solid #777; color: #333; font: 12px "Noto Sans CJK SC", sans-serif; padding: 0; }
.btn.off { color: #bbb; border-color: #ccc; }
.d-3 { display: grid; grid-template-columns: 98px 98px 98px; gap: 2px; }
.sep { border: 0; height: 1px; background: #d8d8d8; margin: 0; flex: none; }
hr.mt2 { margin-top: 2px; } hr.mt3 { margin-top: 3px; } hr.mt4 { margin-top: 4px; }
.d-check { height: 20px; display: flex; align-items: center; gap: 4px; padding-left: 1px; }
.cb { width: 13px; height: 13px; border: 1px solid #444; background: #fff; }
.d-line { display: flex; align-items: center; justify-content: space-between; }
.h23 { height: 23px; } .h24 { height: 24px; } .h25 { height: 25px; } .h28 { height: 28px; }
.grey { color: #aaa; }
.d-input { width: 82px; height: 23px; border: 1px solid #ccc; background: #f4f4f4; font: 13px/21px "Liberation Mono", monospace; padding-left: 4px; white-space: nowrap; overflow: hidden; color: #888; }
.full { width: 302px; flex: none; }
.d-tab { height: 26px; display: flex; align-items: center; }
.tabbtn { width: 62px; height: 26px; border-bottom: 0; }
.d-undef { margin-left: 8px; }
.d-state { height: 20px; line-height: 20px; }
.d-2 { display: grid; grid-template-columns: 149px 149px; gap: 2px; }
.d-ok { margin-top: 12px; display: flex; gap: 5px; padding-left: 124px; }
.ok { width: 54px; height: 25px; border-color: #1d6f96; color: #1d6f96; }
.ok.off { color: #bbb; border-color: #ccc; }

.upload { position: absolute; left: 1674px; top: 11px; width: 128px; height: 32px; border-radius: 10px; overflow: hidden; display: flex; font-size: 12px; }
.up-logo { width: 36px; background: #1e90ff; display: flex; align-items: center; justify-content: center; }
.up-ic { width: 22px; height: 20px; }
.up-t { flex: 1; background: #e4f3fb; color: #2a90d0; line-height: 32px; text-align: center; }

/* IME */
.ime-tip { position: absolute; left: 1754px; top: 919px; width: 61px; height: 20px; background: #f4f8fc; border: 1px solid #b8d4ea; border-radius: 4px; font-size: 11px; line-height: 18px; text-align: center; color: #555; }
.ime-tip::after { content: ""; position: absolute; left: 6px; top: 19px; border-top: 6px solid #d8e8f4; border-left: 4px solid transparent; border-right: 4px solid transparent; }
.ime { position: absolute; left: 1753px; top: 945px; width: 160px; height: 21px; background: #f8fbff; border: 1px solid #d0dfec; display: flex; align-items: center; gap: 7px; padding-left: 1px; color: #3f8ac6; }
.ime-s { width: 18px; height: 19px; background: #d65a1e; color: #fff; font: 700 14px/19px "Liberation Sans", sans-serif; text-align: center; border-radius: 4px; }
.ime-en { font-size: 15px; font-weight: 700; margin-left: -5px; }
.ime-i { width: 14px; height: 14px; }
.ime-p { font: 700 12px "Liberation Sans", sans-serif; }
.float-pill { position: absolute; left: 1884px; top: 443px; width: 50px; height: 36px; border-radius: 18px; background: #f0eefc; display: flex; align-items: center; padding-left: 8px; box-shadow: 0 0 4px #cfc8f2; }
.fp-ic { width: 22px; height: 22px; }

/* taskbar */
.taskbar { height: 40px; background: #1f2b33; position: relative; display: flex; align-items: flex-start; color: #e6e6e6; font-size: 13px; }
.tb-win { width: 18px; height: 18px; margin: 11px 0 0 15px; }
.tb-srch { width: 20px; height: 20px; margin: 10px 0 0 29px; }
.tb-wheel { width: 24px; height: 24px; margin: 8px 0 0 33px; }
.task { width: 139px; height: 40px; margin-left: 8px; border-bottom: 2px solid #74aedb; display: flex; align-items: center; gap: 6px; padding: 0 0 0 8px; white-space: nowrap; overflow: hidden; flex: none; font-size: 12.5px; }
.tb-wheel + .task { margin-left: 17px; padding-left: 11px; }
.task-ic { width: 20px; height: 24px; }
.task-e { width: 22px; height: 24px; }
.task.vv { padding-left: 10px; gap: 9px; }
.task.cur { background: #4c5358; width: 144px; }
.nxi { width: 20px; height: 24px; background: #a01c1c; color: #fff; font: 700 10px/24px "Liberation Sans", sans-serif; text-align: center; box-shadow: -2px 2px 0 #1a8a8a; }
.tray { display: flex; align-items: center; height: 40px; margin-left: 14px; gap: 4px; }
.tray-ch { font-size: 11px; margin-right: 2px; }
.tray-s { width: 15px; height: 18px; background: #d65a1e; color: #fff; font: 700 12px/18px "Liberation Sans", sans-serif; text-align: center; margin-right: 23px; }
.tray-i { width: 20px; display: flex; justify-content: center; }
.tray-i svg { width: 15px; height: 20px; }
.clock { position: absolute; left: 1834px; top: 3px; display: flex; flex-direction: column; font-size: 12.5px; line-height: 18px; white-space: nowrap; color: #eee; }
.wm { position: absolute; left: 1748px; top: 19px; width: 172px; font-size: 14px; line-height: 20px; letter-spacing: 1px; color: rgba(220, 220, 220, .6); white-space: nowrap; overflow: hidden; }
```
